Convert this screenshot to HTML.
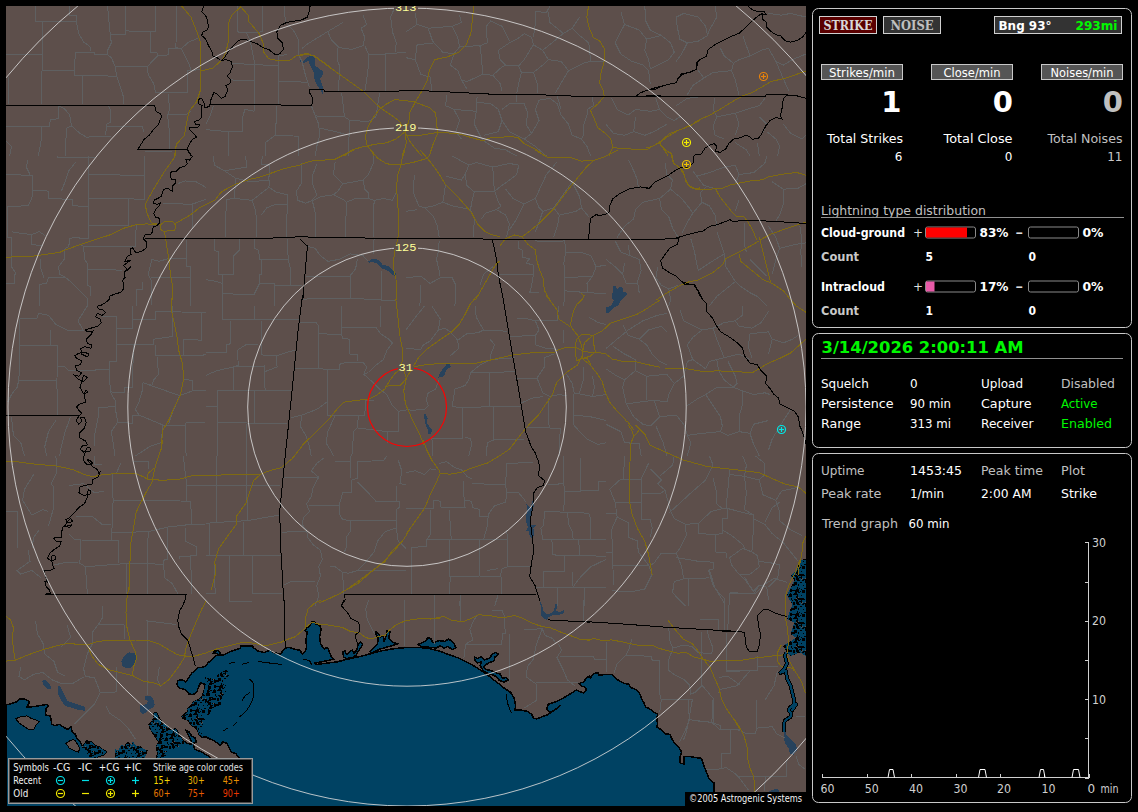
<!DOCTYPE html>
<html lang="en"><head><meta charset="utf-8"><title>Lightning Monitor</title>
<style>
html,body{margin:0;padding:0;background:#000;overflow:hidden}
svg{display:block}
text{white-space:pre}
</style></head><body>
<svg width="1138" height="812" viewBox="0 0 1138 812">
<rect x="0" y="0" width="1138" height="812" fill="#000"/>
<defs><clipPath id="mc"><rect x="6" y="6" width="800" height="800"/></clipPath><pattern id="mp" width="24" height="24" patternUnits="userSpaceOnUse"><rect width="24" height="24" fill="#004263"/><rect x="10" y="4" width="2" height="1" fill="#000"/><rect x="2" y="17" width="1" height="2" fill="#000"/><rect x="18" y="1" width="3" height="1" fill="#000"/><rect x="1" y="2" width="2" height="3" fill="#000"/><rect x="2" y="7" width="1" height="3" fill="#000"/><rect x="1" y="18" width="1" height="1" fill="#000"/><rect x="20" y="20" width="3" height="1" fill="#000"/><rect x="18" y="18" width="2" height="1" fill="#000"/><rect x="7" y="1" width="3" height="1" fill="#000"/><rect x="9" y="13" width="1" height="1" fill="#000"/><rect x="18" y="9" width="3" height="1" fill="#000"/><rect x="3" y="18" width="3" height="1" fill="#000"/><rect x="11" y="3" width="3" height="1" fill="#000"/><rect x="18" y="1" width="3" height="1" fill="#000"/><rect x="15" y="21" width="3" height="3" fill="#000"/><rect x="10" y="14" width="3" height="3" fill="#000"/><rect x="11" y="9" width="1" height="1" fill="#000"/><rect x="22" y="7" width="1" height="2" fill="#000"/><rect x="16" y="15" width="2" height="3" fill="#000"/><rect x="9" y="19" width="1" height="1" fill="#000"/><rect x="16" y="13" width="1" height="2" fill="#000"/><rect x="4" y="15" width="2" height="1" fill="#000"/><rect x="21" y="2" width="3" height="2" fill="#000"/><rect x="10" y="22" width="2" height="3" fill="#000"/><rect x="18" y="14" width="1" height="1" fill="#000"/><rect x="8" y="15" width="1" height="1" fill="#000"/><rect x="23" y="22" width="2" height="3" fill="#000"/><rect x="9" y="22" width="2" height="2" fill="#000"/><rect x="0" y="14" width="2" height="1" fill="#000"/><rect x="19" y="3" width="2" height="1" fill="#000"/><rect x="6" y="9" width="1" height="1" fill="#000"/><rect x="12" y="12" width="2" height="1" fill="#000"/><rect x="5" y="14" width="2" height="2" fill="#000"/><rect x="4" y="13" width="3" height="2" fill="#000"/><rect x="22" y="13" width="2" height="3" fill="#000"/><rect x="7" y="4" width="1" height="1" fill="#000"/><rect x="4" y="7" width="1" height="1" fill="#000"/><rect x="15" y="18" width="1" height="2" fill="#000"/><rect x="9" y="0" width="1" height="3" fill="#000"/><rect x="17" y="11" width="3" height="2" fill="#000"/><rect x="4" y="22" width="3" height="1" fill="#000"/><rect x="14" y="21" width="3" height="3" fill="#000"/><rect x="12" y="12" width="2" height="1" fill="#000"/><rect x="15" y="20" width="2" height="1" fill="#000"/><rect x="6" y="2" width="1" height="3" fill="#000"/><rect x="5" y="3" width="2" height="1" fill="#000"/><rect x="3" y="0" width="3" height="1" fill="#000"/><rect x="17" y="3" width="2" height="1" fill="#000"/><rect x="2" y="6" width="3" height="3" fill="#000"/><rect x="4" y="20" width="2" height="2" fill="#000"/><rect x="19" y="11" width="2" height="1" fill="#000"/><rect x="3" y="15" width="2" height="3" fill="#000"/><rect x="15" y="9" width="1" height="1" fill="#000"/><rect x="3" y="23" width="2" height="2" fill="#000"/><rect x="15" y="22" width="1" height="1" fill="#000"/><rect x="6" y="16" width="2" height="1" fill="#000"/><rect x="22" y="17" width="1" height="2" fill="#000"/><rect x="20" y="2" width="2" height="2" fill="#000"/><rect x="5" y="11" width="1" height="2" fill="#000"/><rect x="20" y="7" width="3" height="1" fill="#000"/><rect x="7" y="12" width="1" height="1" fill="#000"/><rect x="16" y="15" width="2" height="1" fill="#000"/><rect x="0" y="8" width="2" height="2" fill="#000"/><rect x="6" y="22" width="3" height="2" fill="#000"/><rect x="14" y="23" width="2" height="2" fill="#000"/><rect x="2" y="7" width="1" height="1" fill="#000"/><rect x="15" y="6" width="2" height="1" fill="#000"/><rect x="15" y="19" width="3" height="1" fill="#000"/><rect x="15" y="20" width="2" height="1" fill="#000"/><rect x="21" y="3" width="2" height="1" fill="#000"/><rect x="15" y="5" width="2" height="2" fill="#000"/><rect x="2" y="23" width="2" height="3" fill="#000"/><rect x="12" y="23" width="1" height="1" fill="#000"/><rect x="5" y="4" width="1" height="1" fill="#000"/><rect x="18" y="14" width="1" height="3" fill="#000"/><rect x="21" y="11" width="1" height="1" fill="#000"/><rect x="0" y="0" width="1" height="1" fill="#000"/><rect x="13" y="6" width="1" height="1" fill="#000"/><rect x="8" y="6" width="2" height="1" fill="#000"/><rect x="18" y="10" width="2" height="3" fill="#000"/><rect x="4" y="1" width="2" height="3" fill="#000"/><rect x="21" y="18" width="3" height="3" fill="#000"/><rect x="16" y="4" width="3" height="1" fill="#000"/><rect x="16" y="16" width="1" height="3" fill="#000"/><rect x="5" y="19" width="1" height="1" fill="#000"/><rect x="5" y="4" width="2" height="1" fill="#000"/><rect x="17" y="1" width="2" height="3" fill="#000"/><rect x="3" y="17" width="1" height="1" fill="#000"/><rect x="6" y="8" width="1" height="1" fill="#000"/><rect x="16" y="14" width="3" height="1" fill="#000"/><rect x="2" y="14" width="2" height="1" fill="#000"/><rect x="22" y="8" width="2" height="3" fill="#000"/><rect x="16" y="7" width="3" height="2" fill="#000"/><rect x="17" y="6" width="2" height="1" fill="#000"/><rect x="13" y="3" width="2" height="3" fill="#000"/><rect x="10" y="2" width="1" height="1" fill="#5d4f4b"/><rect x="21" y="7" width="1" height="1" fill="#5d4f4b"/><rect x="13" y="2" width="1" height="1" fill="#5d4f4b"/><rect x="6" y="21" width="1" height="1" fill="#5d4f4b"/><rect x="9" y="3" width="1" height="1" fill="#5d4f4b"/><rect x="4" y="22" width="1" height="1" fill="#5d4f4b"/></pattern></defs>
<g id="map" clip-path="url(#mc)" shape-rendering="crispEdges">
<rect x="6" y="6" width="800" height="800" fill="#5d4f4b"/>
<path d="M6.0 806.0 L6.0 704.8 L6.0 704.8 L10.4 704.0 L16.3 701.8 L20.0 698.9 L25.2 699.2 L29.6 701.5 L28.2 704.8 L26.7 707.0 L30.4 707.0 L37.8 706.0 L45.1 704.8 L47.4 704.5 L48.1 706.5 L45.9 708.5 L45.6 715.1 L50.3 715.9 L51.8 724.0 L54.8 725.5 L59.2 724.3 L64.4 727.7 L68.0 729.6 L71.0 726.9 L72.2 732.1 L75.4 734.3 L76.9 738.8 L79.9 741.0 L82.8 746.9 L86.5 741.0 L91.7 741.7 L94.6 745.4 L99.1 746.9 L102.0 749.1 L106.5 752.0 L103.5 755.0 L97.6 756.5 L94.6 759.4 L95.0 775.0 L245.0 775.0 L240.5 760.0 L236.0 753.8 L231.6 752.3 L228.6 747.1 L227.2 743.4 L222.7 741.9 L220.5 745.6 L216.8 742.7 L213.9 740.5 L209.4 738.7 L205.7 736.8 L202.0 737.5 L199.1 734.5 L196.9 728.6 L190.2 724.2 L188.8 720.5 L182.8 718.3 L182.1 716.1 L188.8 710.9 L187.3 709.4 L191.7 705.0 L193.2 702.0 L199.1 699.1 L202.0 696.9 L204.3 690.2 L205.0 684.3 L200.6 682.8 L198.4 687.3 L196.9 691.7 L193.2 694.7 L188.8 693.9 L185.8 690.2 L182.8 688.8 L179.1 688.0 L176.9 684.3 L177.7 680.6 L182.1 679.6 L185.8 682.1 L188.8 677.7 L191.7 673.2 L196.1 669.5 L197.6 667.3 L202.0 667.3 L205.0 666.6 L208.0 662.9 L212.4 659.2 L216.1 655.5 L218.3 654.8 L215.3 652.6 L213.1 653.3 L213.9 651.1 L218.3 650.6 L220.5 652.6 L219.8 655.5 L224.2 654.8 L231.6 651.1 L240.5 648.1 L240.5 645.9 L252.3 645.9 L253.8 648.1 L258.2 651.1 L264.1 652.6 L270.0 650.3 L273.7 652.6 L280.3 654.0 L285.5 648.1 L289.2 647.4 L293.6 648.9 L300.0 650.3 L302.2 653.9 L305.1 651.7 L306.6 647.3 L305.9 639.9 L307.3 631.8 L305.1 631.0 L306.6 628.1 L309.5 625.9 L311.8 622.2 L314.7 622.2 L316.2 624.4 L319.9 625.1 L321.1 629.5 L319.6 636.9 L320.6 644.3 L324.3 648.8 L327.3 647.3 L328.8 650.2 L331.0 656.1 L333.9 659.1 L324.3 661.3 L314.7 663.2 L315.5 664.6 L324.3 663.5 L337.6 661.8 L346.5 659.4 L356.8 657.2 L365.7 655.0 L374.5 652.7 L383.4 650.5 L392.3 648.9 L401.1 647.9 L413.0 647.3 L421.8 647.7 L429.9 648.5 L430.0 648.8 L438.9 651.0 L449.2 654.7 L459.5 658.4 L468.4 662.8 L477.3 668.0 L484.7 673.1 L489.1 676.1 L493.5 679.8 L499.4 684.2 L503.9 687.9 L508.3 690.9 L510.5 692.3 L514.2 698.2 L515.7 706.4 L514.9 710.1 L521.6 710.1 L527.5 711.5 L531.9 714.5 L533.4 718.2 L536.4 718.9 L542.3 716.7 L548.2 714.5 L555.6 709.3 L560.0 705.6 L557.0 708.6 L549.7 712.3 L546.7 709.3 L548.2 704.2 L555.6 701.9 L563.0 698.2 L570.3 693.8 L576.3 690.1 L583.6 693.1 L586.6 690.1 L585.1 687.2 L580.7 685.7 L579.2 683.5 L583.6 682.0 L586.6 677.6 L590.0 676.1 L590.3 678.4 L593.3 673.9 L597.7 672.4 L599.2 675.4 L603.6 674.7 L611.8 674.4 L614.7 677.6 L619.9 681.3 L624.3 683.5 L628.8 684.3 L630.2 687.2 L636.9 690.2 L639.8 693.9 L642.0 699.8 L644.3 703.5 L645.7 707.2 L649.4 708.6 L653.9 712.3 L657.6 713.8 L656.8 719.0 L657.6 723.4 L656.8 727.1 L660.5 729.3 L665.7 733.8 L670.1 734.5 L672.3 740.0 L671.1 736.6 L673.9 742.2 L678.1 746.4 L681.6 752.0 L680.2 756.2 L680.2 763.3 L684.4 764.0 L683.7 756.9 L688.0 756.2 L696.4 757.6 L701.3 758.3 L704.1 766.1 L706.2 771.7 L709.1 778.7 L714.0 783.0 L714.0 792.1 L713.3 806.9 L713.0 810.0 L6.0 810.0Z" fill="#004263" stroke="#000" stroke-width="1.5" stroke-linejoin="round"/>
<path d="M156.3 762.6 L157.7 752.3 L156.3 746.4 L159.2 741.9 L154.8 736.0 L150.3 728.6 L148.9 724.2 L153.3 722.0 L154.8 718.3 L153.3 713.9 L156.3 712.4 L158.5 716.8 L162.2 722.7 L168.1 727.2 L171.8 730.1 L175.5 728.6 L179.1 734.5 L182.8 740.5 L187.3 743.4 L191.7 744.2 L191.0 740.5 L188.8 736.0 L185.8 730.1 L188.8 731.6 L191.7 736.0 L195.4 738.2 L196.1 741.9 L193.2 743.4 L194.7 749.3 L202.0 752.3 L209.4 756.7 L213.9 762.6Z" fill="#004263" stroke="#000" stroke-width="1.5" stroke-linejoin="round"/>
<path d="M342.8 651.7 L345.0 651.0 L346.5 654.7 L349.4 651.7 L352.4 650.2 L353.9 653.2 L356.8 650.2 L358.3 644.3 L360.5 642.1 L362.7 644.3 L361.3 647.3 L358.3 651.0 L356.1 655.4 L352.4 657.6 L346.5 658.4 L343.5 656.9Z" fill="#004263" stroke="#000" stroke-width="1.5" stroke-linejoin="round"/>
<path d="M370.1 651.0 L374.5 647.3 L377.5 644.3 L378.2 638.4 L376.0 634.0 L375.3 631.8 L377.5 632.5 L380.5 636.9 L383.4 636.2 L384.2 641.4 L386.4 635.5 L387.1 630.3 L390.1 631.8 L388.6 638.4 L393.8 642.8 L398.2 643.6 L393.8 645.1 L386.4 647.3 L380.5 648.8 L374.5 651.7 L370.9 653.2Z" fill="#004263" stroke="#000" stroke-width="1.5" stroke-linejoin="round"/>
<path d="M418.1 644.3 L421.8 642.8 L426.3 640.6 L427.7 637.7 L430.7 638.4 L432.2 641.4 L433.0 642.8 L438.9 640.6 L444.8 641.4 L448.5 639.1 L452.2 641.4 L454.4 644.3 L455.9 648.0 L452.2 649.5 L447.7 646.5 L444.0 648.0 L440.3 645.8 L435.9 648.0 L430.0 647.3 L421.8 647.0Z" fill="#004263" stroke="#000" stroke-width="1.5" stroke-linejoin="round"/>
<path d="M474.3 656.9 L477.3 658.4 L481.0 656.9 L484.7 659.8 L489.1 658.4 L492.0 654.7 L495.0 652.4 L498.7 653.9 L495.0 656.9 L494.3 660.6 L489.1 662.8 L485.4 665.0 L483.2 667.2 L486.1 669.4 L492.0 670.9 L496.5 673.1 L500.2 673.9 L502.4 678.3 L506.1 677.6 L508.3 679.8 L503.9 682.0 L499.4 680.5 L496.5 676.8 L492.0 674.6 L487.6 673.1 L483.2 670.9 L480.2 665.7 L481.7 662.0 L477.3 662.8 L475.1 660.6Z" fill="#004263" stroke="#000" stroke-width="1.5" stroke-linejoin="round"/>
<path d="M803.5 560.0 L802.6 578.5 L804.5 597.0 L801.7 615.5 L803.5 637.6 L806.3 652.4 L807.2 652.4 L807.2 560.0Z" fill="#004263" stroke="#000" stroke-width="1.5" stroke-linejoin="round"/>
<path d="M205.0 676.9 L209.4 678.7 L215.3 676.9 L219.8 673.2 L227.2 669.5 L228.6 675.5 L226.4 684.3 L225.7 691.7 L221.3 699.1 L220.5 705.0 L213.9 707.2 L209.4 713.9 L205.7 716.8 L203.5 722.7 L202.8 728.6 L202.0 736.8 L199.1 734.5 L196.9 728.6 L190.2 724.2 L188.8 720.5 L182.8 718.3 L182.1 716.1 L188.8 710.9 L187.3 709.4 L191.7 705.0 L193.2 702.0 L199.1 699.1 L202.0 696.9 L204.3 690.2 L205.0 684.3Z" fill="url(#mp)"/>
<path d="M157.7 752.3 L156.3 746.4 L159.2 741.9 L154.8 736.0 L150.3 728.6 L148.9 724.2 L153.3 722.0 L154.8 718.3 L153.3 713.9 L156.3 712.4 L158.5 716.8 L162.2 722.7 L168.1 727.2 L171.8 730.1 L175.5 728.6 L179.1 734.5 L182.8 740.5 L184.3 743.4 L179.9 746.4 L174.0 748.6 L166.6 752.3 L162.2 756.7Z" fill="url(#mp)"/>
<path d="M115.3 759.4 L115.3 755.0 L114.6 749.1 L118.3 750.6 L121.2 744.7 L124.2 746.1 L127.9 741.0 L131.6 744.7 L133.0 741.0 L136.0 746.1 L140.4 745.4 L143.4 749.1 L147.8 750.6 L146.3 755.0 L143.4 759.4Z" fill="url(#mp)"/>
<path d="M79.9 741.0 L82.8 746.9 L86.5 741.0 L91.7 741.7 L94.6 745.4 L99.1 746.9 L102.0 749.1 L106.5 752.0 L103.5 755.0 L97.6 756.5 L94.6 759.4 L88.7 756.5 L85.8 750.6 L81.3 746.1Z" fill="url(#mp)"/>
<path d="M156.7 759.4 L158.2 752.0 L156.7 746.1 L159.6 740.2 L158.2 734.3 L153.7 729.9 L151.5 726.9 L149.3 724.0 L152.3 719.5 L155.2 715.1 L153.0 711.4 L156.7 713.6 L159.6 719.5 L166.0 725.5 L166.0 759.4Z" fill="url(#mp)"/>
<path d="M799.8 560.0 L796.1 571.1 L790.6 575.7 L794.3 580.3 L786.9 595.1 L792.4 604.4 L786.9 619.2 L794.3 622.9 L790.6 634.0 L796.1 637.6 L783.2 646.0 L786.9 652.4 L790.6 656.1 L799.8 652.4 L806.3 656.1 L806.3 560.0Z" fill="url(#mp)"/>
<path d="M15.6 718.8 L20.8 716.6 L26.7 715.9 L31.9 718.8 L37.0 720.3 L39.2 721.8 L35.5 725.5 L34.1 729.1 L29.6 729.9 L23.7 726.2 L19.3 723.2Z" fill="#5d4f4b" stroke="#000" stroke-width="1"/>
<path d="M65.8 743.2 L69.5 741.0 L73.2 739.5 L75.4 741.0 L77.7 744.7 L79.9 748.4 L78.4 752.0 L74.0 750.6 L69.5 748.4Z" fill="#5d4f4b" stroke="#000" stroke-width="1"/>
<path d="M299.5 59.6 L303.6 61.4 L307.3 56.8 L311.9 55.9 L314.7 58.6 L314.7 65.1 L319.3 68.8 L323.5 71.6 L322.1 76.2 L320.2 78.9 L323.0 87.3 L323.5 96.5 L322.1 92.8 L318.4 87.3 L314.7 79.9 L313.7 72.5 L310.1 65.1 L308.2 60.5 L304.5 63.2 L300.8 62.3Z" fill="#27425c"/>
<path d="M124.2 656.1 L128.8 652.4 L134.3 653.0 L136.7 657.0 L135.3 662.6 L131.6 667.2 L127.0 668.5 L122.3 666.3 L121.4 661.6Z" fill="#27425c"/>
<path d="M144.5 696.7 L149.1 695.4 L152.8 697.7 L154.7 703.2 L151.9 707.8 L147.3 710.6 L143.6 714.3 L140.4 712.4 L140.8 706.9 L145.4 705.0 L148.2 701.3 L145.4 699.5Z" fill="#27425c"/>
<path d="M42.0 680.7 L45.7 680.1 L50.3 684.7 L51.2 688.8 L47.6 689.3 L43.9 685.6Z" fill="#27425c"/>
<path d="M58.6 684.7 L61.4 688.4 L64.2 694.0 L66.9 700.4 L73.4 703.2 L79.9 705.0 L84.5 706.9 L84.5 710.6 L78.9 710.2 L72.5 707.8 L65.1 706.0 L61.4 700.4 L57.7 694.0Z" fill="#27425c"/>
<path d="M612.7 286.7 L615.4 285.7 L617.3 290.4 L620.0 286.7 L621.9 287.6 L622.8 292.2 L627.4 293.1 L624.7 296.8 L621.9 300.0 L612.7 300.0 L611.7 294.0 L613.6 291.3Z" fill="#27425c"/>
<path d="M368.3 261.7 L371.1 259.0 L375.7 258.6 L380.3 261.7 L382.2 264.5 L388.6 266.3 L392.3 270.0 L396.0 273.7 L396.0 277.1 L391.4 273.7 L386.8 270.0 L381.3 268.2 L377.6 263.6 L372.0 261.7 L369.3 263.0Z" fill="#27425c"/>
<path d="M447.1 363.3 L449.5 364.3 L450.8 367.0 L447.1 368.9 L445.2 372.6 L444.3 376.3 L440.6 377.2 L438.4 377.7 L439.7 373.5 L442.5 368.9 L445.2 367.0Z" fill="#27425c"/>
<path d="M424.0 413.2 L426.2 415.0 L427.7 418.7 L426.8 422.4 L429.5 427.0 L431.8 428.9 L431.4 433.5 L428.6 433.9 L427.7 429.8 L425.5 424.3 L424.4 418.7Z" fill="#27425c"/>
<path d="M612.5 287.4 L615.2 285.5 L617.1 289.2 L619.9 286.5 L622.6 288.3 L623.5 292.0 L627.8 292.9 L624.5 297.5 L620.8 300.3 L618.9 304.9 L613.4 307.7 L609.7 312.3 L606.0 313.2 L606.0 307.7 L610.6 305.9 L614.3 300.3 L613.4 294.8Z" fill="#27425c"/>
<path d="M526.0 502.8 L527.9 505.6 L530.7 507.4 L532.5 500.9 L534.3 501.9 L533.4 508.3 L531.6 513.9 L530.1 519.4 L531.6 524.9 L536.2 524.9 L533.4 528.6 L534.3 534.2 L532.5 538.8 L529.7 536.0 L528.8 531.4 L526.0 530.5 L527.9 526.8 L526.0 521.3 L526.0 515.7 L527.5 510.2Z" fill="#27425c"/>
<path d="M540.1 601.5 L542.3 605.9 L543.8 611.8 L546.7 614.0 L551.1 613.3 L554.1 610.3 L555.6 603.7 L557.3 603.7 L556.3 611.1 L560.0 611.8 L563.7 610.3 L563.7 613.3 L558.5 614.8 L554.1 614.8 L548.2 617.0 L547.4 619.9 L543.8 618.5 L541.5 615.5 L541.1 608.9Z" fill="#27425c"/>
<path d="M144.4 696.9 L148.9 695.4 L151.8 696.9 L151.1 699.8 L154.0 701.3 L154.8 705.0 L152.6 708.0 L148.9 708.7 L145.9 713.1 L142.2 713.9 L140.0 710.9 L140.0 705.0 L143.0 705.7 L146.6 703.5 L148.1 700.6 L145.9 699.1Z" fill="#27425c"/>
<path d="M784.3 727.4 L786.4 735.1 L790.6 739.4 L796.2 745.0 L796.9 750.6 L793.4 754.8 L789.9 753.4 L788.5 747.8 L785.0 743.6 L783.6 735.1Z" fill="#27425c"/>
<path d="M768.8 791.4 L772.3 790.0 L776.5 788.9 L778.6 790.0 L778.6 792.8 L768.8 792.8Z" fill="#27425c"/>
<path d="M35.5 6.0 L35.5 21.7 L76.2 21.7 L76.2 15.2 L69.7 15.2 L69.7 6.0" fill="none" stroke="#5f6061" stroke-width="1"/>
<path d="M42.9 21.7 L42.9 54.0 L42.0 70.6 L41.1 103.9" fill="none" stroke="#5f6061" stroke-width="1"/>
<path d="M6.0 54.4 L42.0 54.9" fill="none" stroke="#5f6061" stroke-width="1"/>
<path d="M42.0 70.6 L74.3 70.6" fill="none" stroke="#5f6061" stroke-width="1"/>
<path d="M76.2 21.7 L78.9 33.7 L83.6 42.0 L90.0 46.6 L90.9 51.2" fill="none" stroke="#5f6061" stroke-width="1"/>
<path d="M75.3 52.2 L94.6 52.2 L94.6 54.9 L107.6 54.9" fill="none" stroke="#5f6061" stroke-width="1"/>
<path d="M75.3 52.2 L74.3 75.3 L116.8 76.2" fill="none" stroke="#5f6061" stroke-width="1"/>
<path d="M82.6 76.2 L82.6 103.9" fill="none" stroke="#5f6061" stroke-width="1"/>
<path d="M107.6 6.0 L109.4 26.3 L110.3 34.6 L111.3 42.9 L107.6 50.3 L107.6 54.9 L111.3 57.7 L115.0 66.0 L116.8 76.2 L120.5 87.3 L123.3 96.5 L123.6 103.9" fill="none" stroke="#5f6061" stroke-width="1"/>
<path d="M110.3 34.6 L125.7 34.6 L126.0 6.0" fill="none" stroke="#5f6061" stroke-width="1"/>
<path d="M126.0 30.9 L155.6 31.9 L155.6 6.0" fill="none" stroke="#5f6061" stroke-width="1"/>
<path d="M150.0 31.9 L150.0 52.2 L157.4 53.1 L157.4 55.9" fill="none" stroke="#5f6061" stroke-width="1"/>
<path d="M115.0 66.0 L147.3 66.9 L153.7 59.6 L157.4 55.9 L168.5 54.9 L168.5 48.5 L181.4 48.5 L175.9 47.6 L176.8 6.0" fill="none" stroke="#5f6061" stroke-width="1"/>
<path d="M147.3 66.9 L148.2 74.3 L153.7 83.6 L155.6 92.8 L187.9 92.8 L187.9 70.6 L199.9 69.7" fill="none" stroke="#5f6061" stroke-width="1"/>
<path d="M181.4 48.5 L188.8 63.2 L190.7 69.7" fill="none" stroke="#5f6061" stroke-width="1"/>
<path d="M181.4 48.5 L188.8 42.0 L198.1 38.3" fill="none" stroke="#5f6061" stroke-width="1"/>
<path d="M168.5 93.7 L169.4 109.4 L167.6 115.0 L169.4 131.6 L169.4 149.1" fill="none" stroke="#5f6061" stroke-width="1"/>
<path d="M167.6 115.0 L187.0 114.0 L190.7 111.3" fill="none" stroke="#5f6061" stroke-width="1"/>
<path d="M8.8 77.1 L8.8 103.9" fill="none" stroke="#5f6061" stroke-width="1"/>
<path d="M58.6 105.7 L58.6 118.7 L50.3 119.6 L49.4 126.0 L6.0 126.0" fill="none" stroke="#5f6061" stroke-width="1"/>
<path d="M58.6 105.7 L65.1 109.4 L69.7 115.0 L71.6 126.0 L66.9 127.9 L65.1 149.1" fill="none" stroke="#5f6061" stroke-width="1"/>
<path d="M71.6 126.0 L79.9 133.4 L86.3 137.1 L111.3 136.2" fill="none" stroke="#5f6061" stroke-width="1"/>
<path d="M108.5 105.7 L110.3 109.4 L110.3 122.3 L106.6 124.2 L105.7 135.3" fill="none" stroke="#5f6061" stroke-width="1"/>
<path d="M106.6 126.0 L142.7 127.0 L143.6 131.6" fill="none" stroke="#5f6061" stroke-width="1"/>
<path d="M41.1 127.0 L41.1 140.8 L38.3 156.0" fill="none" stroke="#5f6061" stroke-width="1"/>
<path d="M6.0 140.8 L11.5 146.4 L9.7 156.0" fill="none" stroke="#5f6061" stroke-width="1"/>
<path d="M65.1 149.1 L65.1 156.0" fill="none" stroke="#5f6061" stroke-width="1"/>
<path d="M144.5 151.9 L172.2 151.9" fill="none" stroke="#5f6061" stroke-width="1"/>
<path d="M237.4 6.0 L237.4 31.9 L246.6 32.8 L250.3 41.1 L254.0 59.6 L254.9 103.9" fill="none" stroke="#5f6061" stroke-width="1"/>
<path d="M262.3 6.0 L262.3 31.9 L246.6 32.8" fill="none" stroke="#5f6061" stroke-width="1"/>
<path d="M284.5 6.0 L285.4 24.5" fill="none" stroke="#5f6061" stroke-width="1"/>
<path d="M231.9 63.2 L254.0 64.7 L278.0 65.5 L278.0 81.7 L307.6 82.1" fill="none" stroke="#5f6061" stroke-width="1"/>
<path d="M278.9 81.7 L278.9 103.9" fill="none" stroke="#5f6061" stroke-width="1"/>
<path d="M230.0 79.9 L254.0 80.8" fill="none" stroke="#5f6061" stroke-width="1"/>
<path d="M278.0 65.5 L278.0 55.9 L287.3 54.4" fill="none" stroke="#5f6061" stroke-width="1"/>
<path d="M287.3 24.5 L294.6 31.9 L298.3 39.2 L298.3 54.0 L302.0 61.4 L305.7 76.2 L309.4 87.3" fill="none" stroke="#5f6061" stroke-width="1"/>
<path d="M302.0 48.5 L307.6 43.9 L324.2 33.7 L342.7 22.6" fill="none" stroke="#5f6061" stroke-width="1"/>
<path d="M327.9 31.9 L331.6 40.2 L339.0 47.6 L351.9 49.4 L363.0 45.7 L364.8 37.4 L361.1 28.2 L366.7 24.5 L363.0 15.2" fill="none" stroke="#5f6061" stroke-width="1"/>
<path d="M338.0 47.6 L337.1 59.6 L339.9 66.9 L339.0 79.9 L338.0 90.9" fill="none" stroke="#5f6061" stroke-width="1"/>
<path d="M364.8 45.7 L368.5 54.0 L368.5 65.1 L366.7 79.9 L364.8 90.9" fill="none" stroke="#5f6061" stroke-width="1"/>
<path d="M368.5 54.9 L385.1 54.0 L406.0 52.2" fill="none" stroke="#5f6061" stroke-width="1"/>
<path d="M385.1 54.0 L385.1 90.9" fill="none" stroke="#5f6061" stroke-width="1"/>
<path d="M395.3 6.0 L390.7 17.1 L392.5 31.9 L396.2 42.9 L395.3 52.2" fill="none" stroke="#5f6061" stroke-width="1"/>
<path d="M341.7 92.8 L343.6 109.4 L344.5 116.8 L350.0 120.5 L349.1 135.3 L348.2 156.0" fill="none" stroke="#5f6061" stroke-width="1"/>
<path d="M311.3 105.7 L315.0 115.0 L318.7 124.2 L319.6 135.3 L316.8 146.4 L315.0 156.0" fill="none" stroke="#5f6061" stroke-width="1"/>
<path d="M315.0 115.9 L335.3 116.8 L344.5 116.8" fill="none" stroke="#5f6061" stroke-width="1"/>
<path d="M350.0 120.5 L368.5 121.4 L375.9 116.8 L379.6 92.8" fill="none" stroke="#5f6061" stroke-width="1"/>
<path d="M276.2 105.7 L276.2 120.5 L275.3 135.3 L265.1 142.7 L266.0 156.0" fill="none" stroke="#5f6061" stroke-width="1"/>
<path d="M206.0 129.7 L228.2 131.6 L228.2 156.0" fill="none" stroke="#5f6061" stroke-width="1"/>
<path d="M242.9 116.8 L244.8 109.4 L254.0 111.3 L254.9 104.8" fill="none" stroke="#5f6061" stroke-width="1"/>
<path d="M242.9 116.8 L242.9 131.6 L228.2 131.6" fill="none" stroke="#5f6061" stroke-width="1"/>
<path d="M276.2 135.3 L298.3 136.2 L298.3 156.0" fill="none" stroke="#5f6061" stroke-width="1"/>
<path d="M318.7 127.9 L335.3 131.6 L349.1 135.3" fill="none" stroke="#5f6061" stroke-width="1"/>
<path d="M213.4 105.7 L209.7 116.8 L206.0 124.2" fill="none" stroke="#5f6061" stroke-width="1"/>
<path d="M415.2 13.4 L417.1 24.5 L428.2 28.2 L431.9 39.2 L433.7 42.9 L424.5 43.9 L417.1 44.8 L415.2 59.6 L420.8 74.3 L430.0 77.1" fill="none" stroke="#5f6061" stroke-width="1"/>
<path d="M428.2 28.2 L452.2 26.3 L461.4 22.6 L459.6 15.2" fill="none" stroke="#5f6061" stroke-width="1"/>
<path d="M433.7 42.9 L442.9 52.2 L454.0 54.0 L459.6 46.6 L457.7 37.4 L452.2 26.3" fill="none" stroke="#5f6061" stroke-width="1"/>
<path d="M459.6 46.6 L479.9 45.7 L487.3 42.9" fill="none" stroke="#5f6061" stroke-width="1"/>
<path d="M454.0 54.0 L450.3 65.1 L457.7 70.6 L461.4 79.9 L466.9 89.1" fill="none" stroke="#5f6061" stroke-width="1"/>
<path d="M479.9 45.7 L481.7 59.6 L482.6 74.3 L466.9 81.7 L461.4 79.9" fill="none" stroke="#5f6061" stroke-width="1"/>
<path d="M482.6 74.3 L492.8 75.3 L502.0 66.9 L505.7 65.1 L518.7 66.0 L524.2 59.6 L533.4 44.8 L531.6 37.4 L524.2 33.7 L516.8 39.2 L509.4 42.9 L498.3 50.3 L500.2 59.6 L505.7 65.1" fill="none" stroke="#5f6061" stroke-width="1"/>
<path d="M487.3 42.9 L486.3 26.3 L490.9 20.8 L502.0 26.3 L509.4 41.1" fill="none" stroke="#5f6061" stroke-width="1"/>
<path d="M492.8 75.3 L500.2 83.6 L502.0 90.9" fill="none" stroke="#5f6061" stroke-width="1"/>
<path d="M518.7 66.0 L521.4 72.5 L518.7 83.6 L516.8 92.8" fill="none" stroke="#5f6061" stroke-width="1"/>
<path d="M533.4 44.8 L542.7 50.3 L548.2 59.6 L542.7 65.1 L533.4 72.5 L521.4 72.5" fill="none" stroke="#5f6061" stroke-width="1"/>
<path d="M533.4 72.5 L537.1 83.6 L538.0 92.8" fill="none" stroke="#5f6061" stroke-width="1"/>
<path d="M542.7 50.3 L551.9 42.9 L563.0 33.7 L572.2 28.2 L579.6 17.1" fill="none" stroke="#5f6061" stroke-width="1"/>
<path d="M548.2 59.6 L561.1 61.4 L568.5 70.6 L563.0 79.9 L555.6 92.8" fill="none" stroke="#5f6061" stroke-width="1"/>
<path d="M568.5 70.6 L583.3 63.2 L590.7 61.4 L603.6 61.4" fill="none" stroke="#5f6061" stroke-width="1"/>
<path d="M590.7 61.4 L588.8 42.9 L579.6 35.5 L572.2 28.2" fill="none" stroke="#5f6061" stroke-width="1"/>
<path d="M533.4 37.4 L535.3 24.5 L535.3 11.5 L546.4 12.5 L550.0 6.0" fill="none" stroke="#5f6061" stroke-width="1"/>
<path d="M548.2 12.5 L550.0 22.6 L559.3 30.0 L563.0 33.7" fill="none" stroke="#5f6061" stroke-width="1"/>
<path d="M446.6 94.6 L445.7 105.7 L454.0 109.4 L476.2 111.3 L477.1 96.5" fill="none" stroke="#5f6061" stroke-width="1"/>
<path d="M476.2 111.3 L474.3 124.2 L479.9 135.3 L483.6 140.8" fill="none" stroke="#5f6061" stroke-width="1"/>
<path d="M454.0 109.4 L459.6 120.5 L455.9 131.6 L461.4 139.0" fill="none" stroke="#5f6061" stroke-width="1"/>
<path d="M477.1 102.0 L490.9 103.9 L498.3 109.4 L502.0 120.5 L498.3 131.6 L483.6 135.3" fill="none" stroke="#5f6061" stroke-width="1"/>
<path d="M502.0 109.4 L509.4 103.9 L524.2 103.9 L527.9 113.1 L526.0 124.2 L531.6 133.4 L524.2 139.0 L509.4 131.6 L502.0 120.5" fill="none" stroke="#5f6061" stroke-width="1"/>
<path d="M516.8 94.6 L516.8 102.0" fill="none" stroke="#5f6061" stroke-width="1"/>
<path d="M531.6 133.4 L539.0 120.5 L535.3 109.4 L539.0 100.2 L550.0 98.3 L557.4 103.9 L561.1 115.0 L568.5 124.2 L572.2 135.3 L581.4 139.0 L587.0 146.4 L590.7 156.0" fill="none" stroke="#5f6061" stroke-width="1"/>
<path d="M557.4 96.5 L561.1 109.4" fill="none" stroke="#5f6061" stroke-width="1"/>
<path d="M587.0 115.0 L583.3 126.0 L583.3 135.3 L581.4 139.0" fill="none" stroke="#5f6061" stroke-width="1"/>
<path d="M592.5 96.5 L593.4 105.7 L587.0 109.4 L587.0 115.0" fill="none" stroke="#5f6061" stroke-width="1"/>
<path d="M524.2 139.0 L535.3 146.4 L546.4 156.0" fill="none" stroke="#5f6061" stroke-width="1"/>
<path d="M483.6 140.8 L494.6 148.2 L505.7 150.0 L516.8 156.0" fill="none" stroke="#5f6061" stroke-width="1"/>
<path d="M406.0 31.9 L417.1 24.5" fill="none" stroke="#5f6061" stroke-width="1"/>
<path d="M406.0 57.7 L415.2 59.6" fill="none" stroke="#5f6061" stroke-width="1"/>
<path d="M430.0 77.1 L431.9 90.9" fill="none" stroke="#5f6061" stroke-width="1"/>
<path d="M620.8 11.5 L624.5 24.5 L618.9 35.5 L615.2 42.9 L620.8 54.0 L631.9 61.4 L642.9 65.1 L648.5 70.6 L650.3 83.6" fill="none" stroke="#5f6061" stroke-width="1"/>
<path d="M624.5 24.5 L639.2 30.0 L646.6 39.2 L644.8 50.3 L648.5 59.6 L650.3 68.8" fill="none" stroke="#5f6061" stroke-width="1"/>
<path d="M646.6 39.2 L661.4 35.5 L670.6 42.9 L674.3 52.2 L668.8 59.6 L650.3 68.8" fill="none" stroke="#5f6061" stroke-width="1"/>
<path d="M644.8 6.0 L645.7 20.8 L650.3 30.0 L661.4 35.5" fill="none" stroke="#5f6061" stroke-width="1"/>
<path d="M676.2 17.1 L683.6 13.4 L698.3 17.1 L705.7 26.3 L707.6 35.5 L698.3 41.1 L687.3 42.9 L679.9 39.2 L677.1 26.3 L676.2 17.1" fill="none" stroke="#5f6061" stroke-width="1"/>
<path d="M687.3 42.9 L681.7 54.0 L676.2 61.4" fill="none" stroke="#5f6061" stroke-width="1"/>
<path d="M715.0 6.0 L716.8 17.1 L709.4 30.0 L707.6 35.5" fill="none" stroke="#5f6061" stroke-width="1"/>
<path d="M720.5 48.5 L724.2 55.9 L733.4 63.2 L739.0 59.6 L750.0 55.9 L742.7 35.5" fill="none" stroke="#5f6061" stroke-width="1"/>
<path d="M750.0 55.9 L761.1 50.3 L768.5 48.5 L775.9 61.4 L781.4 74.3 L788.8 90.9" fill="none" stroke="#5f6061" stroke-width="1"/>
<path d="M733.4 63.2 L731.6 70.6 L735.3 79.9 L739.0 94.6" fill="none" stroke="#5f6061" stroke-width="1"/>
<path d="M731.6 70.6 L713.1 72.5 L703.9 78.0 L698.3 70.6" fill="none" stroke="#5f6061" stroke-width="1"/>
<path d="M703.9 78.0 L692.8 85.4 L687.3 94.6" fill="none" stroke="#5f6061" stroke-width="1"/>
<path d="M775.9 61.4 L783.3 65.1 L792.5 59.6 L806.0 54.0" fill="none" stroke="#5f6061" stroke-width="1"/>
<path d="M768.5 13.4 L781.4 15.2 L790.7 13.4 L806.0 17.1" fill="none" stroke="#5f6061" stroke-width="1"/>
<path d="M611.5 98.3 L617.1 109.4 L628.2 115.0 L635.5 109.4 L650.3 111.3 L659.6 109.4 L666.9 116.8 L674.3 120.5 L679.9 116.8" fill="none" stroke="#5f6061" stroke-width="1"/>
<path d="M659.6 109.4 L655.9 98.3" fill="none" stroke="#5f6061" stroke-width="1"/>
<path d="M635.5 116.8 L633.7 131.6 L624.5 135.3 L613.4 133.4 L606.0 124.2" fill="none" stroke="#5f6061" stroke-width="1"/>
<path d="M633.7 131.6 L644.8 135.3 L654.0 131.6 L666.9 124.2" fill="none" stroke="#5f6061" stroke-width="1"/>
<path d="M676.2 105.7 L687.3 98.3 L702.0 96.5" fill="none" stroke="#5f6061" stroke-width="1"/>
<path d="M715.0 98.3 L713.1 109.4 L716.8 116.8 L713.1 126.0 L715.0 135.3 L724.2 139.0" fill="none" stroke="#5f6061" stroke-width="1"/>
<path d="M716.8 116.8 L735.3 113.1 L746.4 109.4 L759.3 105.7 L764.8 98.3" fill="none" stroke="#5f6061" stroke-width="1"/>
<path d="M735.3 113.1 L739.0 124.2 L735.3 135.3" fill="none" stroke="#5f6061" stroke-width="1"/>
<path d="M759.3 116.8 L766.7 124.2 L763.0 131.6" fill="none" stroke="#5f6061" stroke-width="1"/>
<path d="M783.3 124.2 L790.7 133.4 L801.8 139.0 L806.0 135.3" fill="none" stroke="#5f6061" stroke-width="1"/>
<path d="M766.7 131.6 L775.9 139.0 L779.6 146.4 L777.7 156.0" fill="none" stroke="#5f6061" stroke-width="1"/>
<path d="M757.4 142.7 L759.3 156.0" fill="none" stroke="#5f6061" stroke-width="1"/>
<path d="M735.3 142.7 L746.4 150.0 L750.0 156.0" fill="none" stroke="#5f6061" stroke-width="1"/>
<path d="M88.2 156.0 L88.2 174.5 L144.5 175.4 L144.5 156.0" fill="none" stroke="#5f6061" stroke-width="1"/>
<path d="M88.2 174.5 L88.2 198.5 L127.9 198.8 L144.5 199.4 L144.5 175.4" fill="none" stroke="#5f6061" stroke-width="1"/>
<path d="M88.2 198.5 L88.2 225.3 L128.8 225.3 L128.8 199.4" fill="none" stroke="#5f6061" stroke-width="1"/>
<path d="M88.2 225.3 L88.2 238.2 L79.9 238.2 L79.9 237.3 L69.7 238.2 L68.8 246.5 L65.1 248.3" fill="none" stroke="#5f6061" stroke-width="1"/>
<path d="M57.7 156.0 L57.7 157.8 L94.6 157.8" fill="none" stroke="#5f6061" stroke-width="1"/>
<path d="M6.0 174.5 L32.8 175.4 L32.8 190.2 L48.5 191.1 L48.5 198.5 L72.5 199.4 L72.5 205.9 L88.2 206.2" fill="none" stroke="#5f6061" stroke-width="1"/>
<path d="M32.8 190.2 L31.9 198.5 L28.2 205.9 L7.8 206.2 L7.8 237.3 L11.5 237.3 L11.5 266.8 L15.2 272.3 L14.3 283.4 L6.0 283.4" fill="none" stroke="#5f6061" stroke-width="1"/>
<path d="M28.2 159.7 L26.3 167.1 L30.0 174.5" fill="none" stroke="#5f6061" stroke-width="1"/>
<path d="M76.2 161.5 L68.8 170.8 L65.1 181.9 L61.4 191.1" fill="none" stroke="#5f6061" stroke-width="1"/>
<path d="M11.5 231.7 L22.6 233.6 L31.9 234.5 L39.2 231.7 L44.8 235.4" fill="none" stroke="#5f6061" stroke-width="1"/>
<path d="M31.9 234.5 L31.9 244.6 L42.9 245.6" fill="none" stroke="#5f6061" stroke-width="1"/>
<path d="M65.1 248.3 L64.2 259.4 L58.6 266.8 L59.6 274.2 L65.1 277.0 L48.5 277.0 L46.6 283.4 L39.2 284.3 L39.2 306.0" fill="none" stroke="#5f6061" stroke-width="1"/>
<path d="M40.2 259.4 L40.2 266.8 L43.9 277.9" fill="none" stroke="#5f6061" stroke-width="1"/>
<path d="M65.1 277.0 L70.6 281.6 L79.9 290.8 L87.3 298.2 L87.3 306.0" fill="none" stroke="#5f6061" stroke-width="1"/>
<path d="M80.8 244.6 L83.6 246.5 L84.5 259.4 L87.3 263.1 L87.3 285.3 L90.9 287.1 L90.9 296.4" fill="none" stroke="#5f6061" stroke-width="1"/>
<path d="M83.6 246.5 L135.3 246.5 L136.2 225.3" fill="none" stroke="#5f6061" stroke-width="1"/>
<path d="M87.3 269.6 L122.3 270.1" fill="none" stroke="#5f6061" stroke-width="1"/>
<path d="M151.9 259.4 L150.0 266.8 L148.2 274.2 L151.9 281.6 L151.0 306.0" fill="none" stroke="#5f6061" stroke-width="1"/>
<path d="M151.9 259.4 L159.3 261.3 L168.5 258.5 L186.1 258.5 L186.1 266.8 L190.7 266.8 L190.7 277.0 L151.0 277.0" fill="none" stroke="#5f6061" stroke-width="1"/>
<path d="M186.1 240.0 L186.1 258.5" fill="none" stroke="#5f6061" stroke-width="1"/>
<path d="M190.7 277.0 L190.7 306.0" fill="none" stroke="#5f6061" stroke-width="1"/>
<path d="M142.7 281.6 L142.7 289.0 L136.2 289.9 L136.2 306.0" fill="none" stroke="#5f6061" stroke-width="1"/>
<path d="M192.5 204.0 L192.5 228.0" fill="none" stroke="#5f6061" stroke-width="1"/>
<path d="M177.7 183.7 L185.1 180.9 L196.2 181.9 L206.0 187.4" fill="none" stroke="#5f6061" stroke-width="1"/>
<path d="M163.0 203.1 L183.3 204.0 L192.5 204.0 L206.0 199.4" fill="none" stroke="#5f6061" stroke-width="1"/>
<path d="M213.4 156.0 L214.3 165.2 L224.5 170.8 L235.5 178.2 L234.6 198.5 L226.3 199.4 L225.4 237.3" fill="none" stroke="#5f6061" stroke-width="1"/>
<path d="M224.5 170.8 L246.6 167.1 L245.7 156.0" fill="none" stroke="#5f6061" stroke-width="1"/>
<path d="M235.5 178.2 L250.3 181.9 L268.8 180.0 L269.7 165.2 L261.4 164.3 L262.3 156.0" fill="none" stroke="#5f6061" stroke-width="1"/>
<path d="M234.6 198.5 L252.2 200.3 L255.9 211.4 L256.8 237.3" fill="none" stroke="#5f6061" stroke-width="1"/>
<path d="M252.2 200.3 L268.8 187.4 L269.7 180.0" fill="none" stroke="#5f6061" stroke-width="1"/>
<path d="M268.8 187.4 L276.2 192.0 L287.3 194.8 L287.3 204.0 L286.3 237.3" fill="none" stroke="#5f6061" stroke-width="1"/>
<path d="M261.4 215.1 L266.9 207.7 L276.2 204.0 L287.3 204.0" fill="none" stroke="#5f6061" stroke-width="1"/>
<path d="M301.1 163.4 L301.1 183.7 L296.5 191.1 L297.4 200.3 L305.7 203.1 L313.1 200.3" fill="none" stroke="#5f6061" stroke-width="1"/>
<path d="M316.8 164.3 L312.2 176.3 L313.1 185.5 L316.8 194.8 L312.2 200.3 L315.0 211.4 L315.9 237.3" fill="none" stroke="#5f6061" stroke-width="1"/>
<path d="M313.1 200.3 L320.5 196.6 L333.4 194.8 L344.5 200.3 L346.4 202.2 L345.4 237.3" fill="none" stroke="#5f6061" stroke-width="1"/>
<path d="M335.3 161.5 L333.4 174.5 L339.0 180.0 L342.7 183.7 L338.0 191.1 L333.4 194.8" fill="none" stroke="#5f6061" stroke-width="1"/>
<path d="M342.7 183.7 L353.7 181.9 L363.0 180.0 L368.5 174.5 L373.1 163.4 L373.1 156.0" fill="none" stroke="#5f6061" stroke-width="1"/>
<path d="M363.0 180.0 L364.8 189.2 L368.5 192.9 L368.5 198.5 L374.1 200.3 L373.1 237.3" fill="none" stroke="#5f6061" stroke-width="1"/>
<path d="M346.4 202.2 L355.6 198.5 L368.5 198.5" fill="none" stroke="#5f6061" stroke-width="1"/>
<path d="M374.1 200.3 L383.3 198.5 L392.5 200.3 L396.2 192.9" fill="none" stroke="#5f6061" stroke-width="1"/>
<path d="M214.3 239.1 L214.3 250.2 L218.9 252.0 L218.9 274.2 L222.6 274.2 L222.6 306.0" fill="none" stroke="#5f6061" stroke-width="1"/>
<path d="M239.2 239.1 L239.2 250.2 L233.7 255.7 L233.7 274.2 L222.6 274.2" fill="none" stroke="#5f6061" stroke-width="1"/>
<path d="M254.0 239.1 L254.0 248.3 L258.6 250.2 L259.6 259.4 L288.2 259.4 L287.3 239.1" fill="none" stroke="#5f6061" stroke-width="1"/>
<path d="M261.4 259.4 L261.4 274.2 L259.6 274.2 L259.6 283.4 L254.0 294.5 L245.7 294.5 L222.6 293.6" fill="none" stroke="#5f6061" stroke-width="1"/>
<path d="M259.6 283.4 L274.3 283.4 L274.3 306.0" fill="none" stroke="#5f6061" stroke-width="1"/>
<path d="M288.2 259.4 L290.9 270.5 L290.9 285.3 L274.3 285.3" fill="none" stroke="#5f6061" stroke-width="1"/>
<path d="M290.9 285.3 L302.0 285.3" fill="none" stroke="#5f6061" stroke-width="1"/>
<path d="M307.6 246.5 L315.0 248.3 L320.5 255.7 L327.9 261.3 L339.0 259.4 L350.0 253.9 L363.0 255.7 L368.5 261.3" fill="none" stroke="#5f6061" stroke-width="1"/>
<path d="M357.4 259.4 L355.6 268.7 L350.0 276.0 L305.7 276.0" fill="none" stroke="#5f6061" stroke-width="1"/>
<path d="M350.0 276.0 L350.0 298.2 L302.0 299.1" fill="none" stroke="#5f6061" stroke-width="1"/>
<path d="M374.1 239.1 L373.1 253.9" fill="none" stroke="#5f6061" stroke-width="1"/>
<path d="M381.4 270.5 L381.4 300.0 L396.2 300.0" fill="none" stroke="#5f6061" stroke-width="1"/>
<path d="M350.0 298.2 L381.4 300.0" fill="none" stroke="#5f6061" stroke-width="1"/>
<path d="M206.0 279.7 L217.1 281.6 L222.6 283.4" fill="none" stroke="#5f6061" stroke-width="1"/>
<path d="M414.3 174.5 L413.4 192.9 L418.9 205.9 L424.5 207.7 L433.7 205.9 L442.9 202.2 L445.7 183.7" fill="none" stroke="#5f6061" stroke-width="1"/>
<path d="M424.5 207.7 L433.7 216.9 L437.4 226.2 L439.2 237.3" fill="none" stroke="#5f6061" stroke-width="1"/>
<path d="M442.9 202.2 L452.2 205.9 L461.4 207.7 L470.6 209.6 L474.3 218.8 L473.4 237.3" fill="none" stroke="#5f6061" stroke-width="1"/>
<path d="M445.7 176.3 L461.4 180.0 L465.1 174.5 L468.8 165.2 L452.2 156.0" fill="none" stroke="#5f6061" stroke-width="1"/>
<path d="M465.1 174.5 L466.9 185.5 L474.3 192.0 L494.6 191.1 L502.0 185.5 L516.8 174.5 L518.7 165.2 L509.4 163.4 L492.8 167.1 L493.7 183.7 L494.6 191.1" fill="none" stroke="#5f6061" stroke-width="1"/>
<path d="M468.8 165.2 L476.2 162.5 L492.8 167.1" fill="none" stroke="#5f6061" stroke-width="1"/>
<path d="M474.3 192.0 L471.6 202.2 L470.6 209.6" fill="none" stroke="#5f6061" stroke-width="1"/>
<path d="M494.6 191.1 L498.3 202.2 L501.1 205.9 L496.5 209.6 L485.4 213.2 L481.7 218.8" fill="none" stroke="#5f6061" stroke-width="1"/>
<path d="M496.5 209.6 L505.7 215.1 L509.4 224.3 L506.6 237.3" fill="none" stroke="#5f6061" stroke-width="1"/>
<path d="M505.7 189.2 L513.1 198.5 L524.2 204.0 L535.3 198.5 L546.4 174.5 L557.4 161.5" fill="none" stroke="#5f6061" stroke-width="1"/>
<path d="M524.2 204.0 L516.8 218.8 L509.4 229.9" fill="none" stroke="#5f6061" stroke-width="1"/>
<path d="M535.3 198.5 L539.0 207.7 L542.7 211.4 L553.7 207.7 L572.2 181.9" fill="none" stroke="#5f6061" stroke-width="1"/>
<path d="M542.7 211.4 L539.0 222.5 L535.3 231.7" fill="none" stroke="#5f6061" stroke-width="1"/>
<path d="M553.7 207.7 L559.3 215.1 L557.4 226.2 L553.7 237.3" fill="none" stroke="#5f6061" stroke-width="1"/>
<path d="M572.2 181.9 L579.6 196.6 L581.4 207.7 L575.9 211.4 L559.3 215.1" fill="none" stroke="#5f6061" stroke-width="1"/>
<path d="M581.4 207.7 L588.8 216.9" fill="none" stroke="#5f6061" stroke-width="1"/>
<path d="M518.7 240.9 L518.7 248.3 L522.3 250.2 L522.3 257.6 L529.7 258.5 L526.0 263.1 L533.4 265.0 L533.4 274.2 L498.3 274.2" fill="none" stroke="#5f6061" stroke-width="1"/>
<path d="M533.4 274.2 L531.6 285.3 L529.7 292.7 L539.0 292.7" fill="none" stroke="#5f6061" stroke-width="1"/>
<path d="M535.3 240.9 L550.0 241.9 L564.8 240.9 L565.7 252.0 L563.9 263.1 L564.8 277.9 L563.9 306.0" fill="none" stroke="#5f6061" stroke-width="1"/>
<path d="M565.7 252.0 L583.3 253.0 L590.7 255.7 L596.2 266.8 L592.5 276.0 L564.8 277.9" fill="none" stroke="#5f6061" stroke-width="1"/>
<path d="M596.2 266.8 L606.0 265.0" fill="none" stroke="#5f6061" stroke-width="1"/>
<path d="M592.5 276.0 L587.0 283.4 L587.9 292.7 L606.0 293.6" fill="none" stroke="#5f6061" stroke-width="1"/>
<path d="M564.8 290.8 L587.9 292.7" fill="none" stroke="#5f6061" stroke-width="1"/>
<path d="M436.5 259.4 L439.2 270.5 L440.2 277.9 L430.0 283.4 L420.8 276.0 L406.0 277.9" fill="none" stroke="#5f6061" stroke-width="1"/>
<path d="M440.2 277.9 L452.2 277.9 L455.9 285.3 L454.9 306.0" fill="none" stroke="#5f6061" stroke-width="1"/>
<path d="M439.2 240.9 L438.3 252.0 L436.5 259.4" fill="none" stroke="#5f6061" stroke-width="1"/>
<path d="M492.8 266.8 L483.6 274.2 L479.9 285.3" fill="none" stroke="#5f6061" stroke-width="1"/>
<path d="M406.0 211.4 L417.1 209.6" fill="none" stroke="#5f6061" stroke-width="1"/>
<path d="M420.8 285.3 L419.9 306.0" fill="none" stroke="#5f6061" stroke-width="1"/>
<path d="M628.2 159.7 L633.7 170.8 L637.4 180.0 L638.3 187.4" fill="none" stroke="#5f6061" stroke-width="1"/>
<path d="M665.1 163.4 L666.9 174.5 L672.5 180.0 L670.6 189.2 L659.6 198.5 L661.4 209.6 L668.8 216.9 L672.5 228.0 L678.0 237.3" fill="none" stroke="#5f6061" stroke-width="1"/>
<path d="M659.6 198.5 L642.9 202.2 L635.5 209.6 L633.7 218.8 L624.5 226.2 L617.1 237.3" fill="none" stroke="#5f6061" stroke-width="1"/>
<path d="M670.6 189.2 L681.7 198.5 L689.1 207.7 L692.8 213.2 L687.3 222.5 L681.7 233.6" fill="none" stroke="#5f6061" stroke-width="1"/>
<path d="M692.8 213.2 L702.0 202.2 L709.4 205.9 L715.0 215.1 L716.8 226.2" fill="none" stroke="#5f6061" stroke-width="1"/>
<path d="M702.0 202.2 L700.2 192.9 L705.7 187.4" fill="none" stroke="#5f6061" stroke-width="1"/>
<path d="M692.8 170.8 L698.3 178.2 L703.9 185.5 L716.8 189.2" fill="none" stroke="#5f6061" stroke-width="1"/>
<path d="M696.5 176.3 L709.4 172.6 L724.2 167.1 L735.3 165.2" fill="none" stroke="#5f6061" stroke-width="1"/>
<path d="M735.3 165.2 L739.0 174.5 L735.3 183.7" fill="none" stroke="#5f6061" stroke-width="1"/>
<path d="M739.0 174.5 L753.7 172.6 L764.8 163.4 L766.7 156.0" fill="none" stroke="#5f6061" stroke-width="1"/>
<path d="M739.0 200.3 L735.3 211.4" fill="none" stroke="#5f6061" stroke-width="1"/>
<path d="M772.2 181.9 L783.3 189.2 L783.3 204.0 L779.6 215.1 L775.9 220.6" fill="none" stroke="#5f6061" stroke-width="1"/>
<path d="M783.3 189.2 L798.1 188.3 L806.0 183.7" fill="none" stroke="#5f6061" stroke-width="1"/>
<path d="M690.9 239.1 L694.6 252.0 L696.5 263.1 L698.3 270.5" fill="none" stroke="#5f6061" stroke-width="1"/>
<path d="M716.8 231.7 L720.5 242.8 L724.2 253.9 L726.0 266.8 L735.3 281.6 L739.0 285.3" fill="none" stroke="#5f6061" stroke-width="1"/>
<path d="M744.5 222.5 L744.5 244.6 L746.4 252.0" fill="none" stroke="#5f6061" stroke-width="1"/>
<path d="M698.3 270.5 L709.4 263.1 L724.2 253.9" fill="none" stroke="#5f6061" stroke-width="1"/>
<path d="M768.5 226.2 L775.9 237.3 L779.6 248.3 L775.9 259.4 L772.2 274.2" fill="none" stroke="#5f6061" stroke-width="1"/>
<path d="M779.6 248.3 L794.4 244.6 L806.0 242.8" fill="none" stroke="#5f6061" stroke-width="1"/>
<path d="M799.9 226.2 L801.8 239.1 L800.8 252.0 L801.8 266.8" fill="none" stroke="#5f6061" stroke-width="1"/>
<path d="M735.3 281.6 L726.0 289.0 L716.8 296.4 L709.4 306.0" fill="none" stroke="#5f6061" stroke-width="1"/>
<path d="M739.0 285.3 L750.0 292.7 L757.4 296.4 L766.7 306.0" fill="none" stroke="#5f6061" stroke-width="1"/>
<path d="M750.0 259.4 L757.4 266.8 L766.7 276.0" fill="none" stroke="#5f6061" stroke-width="1"/>
<path d="M615.2 240.9 L620.8 252.0 L630.0 255.7 L639.2 259.4 L641.1 270.5 L637.4 281.6 L639.2 292.7" fill="none" stroke="#5f6061" stroke-width="1"/>
<path d="M630.0 255.7 L628.2 244.6" fill="none" stroke="#5f6061" stroke-width="1"/>
<path d="M624.5 263.1 L622.6 274.2 L626.3 283.4 L637.4 283.4" fill="none" stroke="#5f6061" stroke-width="1"/>
<path d="M657.7 266.8 L655.9 277.9 L661.4 285.3 L668.8 289.0 L678.0 285.3" fill="none" stroke="#5f6061" stroke-width="1"/>
<path d="M668.8 289.0 L670.6 300.0 L668.8 306.0" fill="none" stroke="#5f6061" stroke-width="1"/>
<path d="M606.0 259.4 L615.2 266.8 L622.6 274.2" fill="none" stroke="#5f6061" stroke-width="1"/>
<path d="M19.9 318.9 L19.9 344.8 L18.9 379.9 L17.1 387.3 L11.5 394.6 L7.8 402.0" fill="none" stroke="#5f6061" stroke-width="1"/>
<path d="M19.9 318.9 L37.4 318.0 L38.3 313.4 L48.5 315.2 L55.9 324.5 L66.9 330.0 L83.6 330.9" fill="none" stroke="#5f6061" stroke-width="1"/>
<path d="M50.3 330.0 L50.3 345.7 L57.7 345.7 L57.7 366.9 L65.1 366.9 L68.8 370.6 L109.4 369.7 L109.4 361.4 L116.8 361.4 L116.8 328.2 L132.5 328.2" fill="none" stroke="#5f6061" stroke-width="1"/>
<path d="M19.9 345.7 L50.3 345.7" fill="none" stroke="#5f6061" stroke-width="1"/>
<path d="M18.9 380.8 L56.8 380.8 L57.7 366.9" fill="none" stroke="#5f6061" stroke-width="1"/>
<path d="M56.8 380.8 L57.7 415.0" fill="none" stroke="#5f6061" stroke-width="1"/>
<path d="M116.8 316.2 L116.8 328.2" fill="none" stroke="#5f6061" stroke-width="1"/>
<path d="M102.0 316.2 L116.8 316.2" fill="none" stroke="#5f6061" stroke-width="1"/>
<path d="M83.6 330.9 L78.0 320.8 L87.3 306.0" fill="none" stroke="#5f6061" stroke-width="1"/>
<path d="M132.5 306.0 L132.5 328.2" fill="none" stroke="#5f6061" stroke-width="1"/>
<path d="M132.5 319.9 L155.6 319.9 L155.6 311.5 L206.0 312.5" fill="none" stroke="#5f6061" stroke-width="1"/>
<path d="M116.8 344.8 L133.4 344.8 L153.7 344.8 L153.7 339.2 L172.2 336.5 L172.2 306.0" fill="none" stroke="#5f6061" stroke-width="1"/>
<path d="M109.4 369.7 L110.3 391.9 L124.2 392.8 L124.2 387.3 L132.5 387.3 L133.4 344.8" fill="none" stroke="#5f6061" stroke-width="1"/>
<path d="M110.3 391.9 L115.0 400.2 L115.0 406.6 L98.3 407.6 L98.3 416.8 L94.6 435.3 L94.6 446.4" fill="none" stroke="#5f6061" stroke-width="1"/>
<path d="M115.0 406.6 L117.7 422.3 L132.5 423.3 L132.5 415.0 L139.0 415.0" fill="none" stroke="#5f6061" stroke-width="1"/>
<path d="M155.6 344.8 L155.6 355.9 L183.3 355.9 L183.3 339.2 L201.8 340.2 L201.8 311.5" fill="none" stroke="#5f6061" stroke-width="1"/>
<path d="M183.3 355.9 L206.0 354.9" fill="none" stroke="#5f6061" stroke-width="1"/>
<path d="M157.4 356.8 L158.4 374.3 L153.7 379.9 L151.9 385.4 L142.7 382.6" fill="none" stroke="#5f6061" stroke-width="1"/>
<path d="M142.7 382.6 L142.7 389.1 L139.0 402.0 L135.3 409.4 L139.0 415.0 L163.0 425.1" fill="none" stroke="#5f6061" stroke-width="1"/>
<path d="M142.7 382.6 L179.6 395.6 L192.5 390.9 L192.5 380.8 L183.3 378.9" fill="none" stroke="#5f6061" stroke-width="1"/>
<path d="M192.5 390.9 L206.0 390.0" fill="none" stroke="#5f6061" stroke-width="1"/>
<path d="M163.0 425.1 L185.1 426.0 L186.1 422.3 L206.0 422.0" fill="none" stroke="#5f6061" stroke-width="1"/>
<path d="M185.1 426.0 L186.1 456.0" fill="none" stroke="#5f6061" stroke-width="1"/>
<path d="M117.7 422.3 L111.3 431.6 L113.1 442.7 L115.0 456.0" fill="none" stroke="#5f6061" stroke-width="1"/>
<path d="M163.0 425.1 L161.1 442.7 L150.0 446.4 L135.3 456.0" fill="none" stroke="#5f6061" stroke-width="1"/>
<path d="M70.6 416.8 L65.1 431.6 L61.4 446.4 L59.6 456.0" fill="none" stroke="#5f6061" stroke-width="1"/>
<path d="M55.9 420.5 L48.5 431.6 L44.8 446.4 L46.6 456.0" fill="none" stroke="#5f6061" stroke-width="1"/>
<path d="M11.5 416.8 L13.4 435.3 L20.8 442.7 L24.5 456.0" fill="none" stroke="#5f6061" stroke-width="1"/>
<path d="M179.6 395.6 L172.2 413.1 L168.5 424.2" fill="none" stroke="#5f6061" stroke-width="1"/>
<path d="M222.6 306.0 L222.6 319.9 L254.0 319.9 L254.0 306.0" fill="none" stroke="#5f6061" stroke-width="1"/>
<path d="M254.0 319.9 L261.4 319.9 L300.2 319.9" fill="none" stroke="#5f6061" stroke-width="1"/>
<path d="M230.9 320.8 L230.0 343.9 L226.3 344.8 L226.3 352.2 L206.0 352.2" fill="none" stroke="#5f6061" stroke-width="1"/>
<path d="M261.4 320.8 L261.4 354.9 L276.2 355.9 L287.3 352.2 L294.6 350.3" fill="none" stroke="#5f6061" stroke-width="1"/>
<path d="M276.2 355.9 L277.1 366.9 L265.1 371.6" fill="none" stroke="#5f6061" stroke-width="1"/>
<path d="M237.4 350.3 L245.7 344.8 L257.7 344.8" fill="none" stroke="#5f6061" stroke-width="1"/>
<path d="M237.4 350.3 L238.3 365.1 L233.7 366.9 L233.7 390.0 L217.1 390.9 L217.1 406.6 L206.0 406.6" fill="none" stroke="#5f6061" stroke-width="1"/>
<path d="M233.7 366.9 L264.2 366.0 L265.1 390.0 L233.7 390.0" fill="none" stroke="#5f6061" stroke-width="1"/>
<path d="M217.1 406.6 L217.1 456.0" fill="none" stroke="#5f6061" stroke-width="1"/>
<path d="M265.1 390.0 L290.9 390.0" fill="none" stroke="#5f6061" stroke-width="1"/>
<path d="M254.9 390.9 L254.9 423.3 L239.2 422.7 L217.1 422.3" fill="none" stroke="#5f6061" stroke-width="1"/>
<path d="M254.9 423.3 L287.3 423.3" fill="none" stroke="#5f6061" stroke-width="1"/>
<path d="M246.6 424.2 L246.6 456.0" fill="none" stroke="#5f6061" stroke-width="1"/>
<path d="M206.0 375.3 L217.1 370.6 L233.7 366.9" fill="none" stroke="#5f6061" stroke-width="1"/>
<path d="M300.2 322.3 L315.9 322.6 L318.7 325.4 L318.7 368.8 L294.6 368.8" fill="none" stroke="#5f6061" stroke-width="1"/>
<path d="M318.7 333.7 L341.7 334.6 L341.7 306.0" fill="none" stroke="#5f6061" stroke-width="1"/>
<path d="M341.7 327.2 L375.9 327.2 L380.5 333.7 L388.8 339.2 L392.5 342.9 L387.0 350.3 L383.3 359.6 L375.9 365.1 L368.5 372.5 L363.9 374.3" fill="none" stroke="#5f6061" stroke-width="1"/>
<path d="M341.7 334.6 L342.7 338.3 L349.1 339.2 L350.0 354.0 L357.4 354.9 L357.4 361.4" fill="none" stroke="#5f6061" stroke-width="1"/>
<path d="M318.7 368.8 L339.0 369.7 L339.9 364.2 L346.4 362.3 L363.0 362.3 L366.7 366.9 L363.9 374.3 L372.2 381.7 L379.6 389.1 L387.0 394.6" fill="none" stroke="#5f6061" stroke-width="1"/>
<path d="M327.0 369.7 L327.0 402.0 L327.9 415.0 L364.8 415.0 L365.7 400.2 L374.1 400.2" fill="none" stroke="#5f6061" stroke-width="1"/>
<path d="M327.0 402.0 L316.8 409.4 L302.0 415.0 L290.9 417.7" fill="none" stroke="#5f6061" stroke-width="1"/>
<path d="M302.0 415.0 L300.2 426.0 L305.7 435.3 L309.4 446.4 L311.3 456.0" fill="none" stroke="#5f6061" stroke-width="1"/>
<path d="M335.3 415.0 L327.9 431.6 L326.0 442.7 L331.6 451.9 L333.4 456.0" fill="none" stroke="#5f6061" stroke-width="1"/>
<path d="M364.8 415.0 L358.4 415.9 L357.4 427.9 L353.7 431.6 L351.9 456.0" fill="none" stroke="#5f6061" stroke-width="1"/>
<path d="M357.4 427.9 L387.0 431.6 L387.9 442.7" fill="none" stroke="#5f6061" stroke-width="1"/>
<path d="M387.0 394.6 L392.5 405.7 L398.1 411.3 L406.0 410.3" fill="none" stroke="#5f6061" stroke-width="1"/>
<path d="M398.1 411.3 L399.0 431.6 L387.0 431.6" fill="none" stroke="#5f6061" stroke-width="1"/>
<path d="M380.5 306.0 L380.5 327.2" fill="none" stroke="#5f6061" stroke-width="1"/>
<path d="M424.5 306.0 L417.1 315.2 L406.0 330.0" fill="none" stroke="#5f6061" stroke-width="1"/>
<path d="M431.9 306.0 L440.2 318.9 L438.3 330.0 L444.8 328.2 L450.3 331.9 L457.7 340.2 L466.9 333.7 L478.0 332.8 L483.6 330.0 L498.3 330.0 L506.6 331.9" fill="none" stroke="#5f6061" stroke-width="1"/>
<path d="M475.3 306.0 L476.2 317.1 L483.6 330.0" fill="none" stroke="#5f6061" stroke-width="1"/>
<path d="M457.7 340.2 L458.6 348.5 L450.3 355.9" fill="none" stroke="#5f6061" stroke-width="1"/>
<path d="M406.0 348.5 L420.8 349.4 L423.5 344.8 L430.0 341.1 L438.3 330.0" fill="none" stroke="#5f6061" stroke-width="1"/>
<path d="M490.0 339.2 L494.6 344.8 L490.9 354.0 L490.9 359.6 L479.9 365.1 L470.6 372.5 L468.8 379.9 L465.1 385.4 L454.9 389.1 L452.2 406.6" fill="none" stroke="#5f6061" stroke-width="1"/>
<path d="M490.9 359.6 L515.0 357.7" fill="none" stroke="#5f6061" stroke-width="1"/>
<path d="M470.6 372.5 L490.0 372.5 L515.0 371.6" fill="none" stroke="#5f6061" stroke-width="1"/>
<path d="M490.0 372.5 L489.1 406.6" fill="none" stroke="#5f6061" stroke-width="1"/>
<path d="M452.2 406.6 L462.3 407.6 L493.7 406.6 L520.5 406.6" fill="none" stroke="#5f6061" stroke-width="1"/>
<path d="M462.3 407.6 L462.3 438.0 L431.9 438.0 L432.8 456.0" fill="none" stroke="#5f6061" stroke-width="1"/>
<path d="M493.7 406.6 L493.7 439.9 L487.3 442.7 L486.3 456.0" fill="none" stroke="#5f6061" stroke-width="1"/>
<path d="M493.7 439.9 L511.3 439.9 L524.2 439.0" fill="none" stroke="#5f6061" stroke-width="1"/>
<path d="M428.2 392.8 L426.3 400.2 L428.2 405.7 L424.5 409.4 L411.5 410.3 L406.0 409.4" fill="none" stroke="#5f6061" stroke-width="1"/>
<path d="M428.2 392.8 L435.5 389.1 L439.2 379.9" fill="none" stroke="#5f6061" stroke-width="1"/>
<path d="M516.8 318.0 L527.9 318.9 L535.3 320.8 L557.4 320.8 L558.4 306.0" fill="none" stroke="#5f6061" stroke-width="1"/>
<path d="M509.4 336.5 L535.3 335.5 L535.3 344.8 L546.4 348.5 L559.3 349.4" fill="none" stroke="#5f6061" stroke-width="1"/>
<path d="M535.3 320.8 L539.0 330.0 L535.3 335.5" fill="none" stroke="#5f6061" stroke-width="1"/>
<path d="M515.0 378.9 L537.1 378.0 L542.7 392.8 L550.0 396.5 L559.3 394.6 L566.7 395.6" fill="none" stroke="#5f6061" stroke-width="1"/>
<path d="M537.1 378.0 L544.5 366.9 L544.5 357.7 L553.7 354.0" fill="none" stroke="#5f6061" stroke-width="1"/>
<path d="M521.4 403.0 L531.6 398.3 L542.7 396.5" fill="none" stroke="#5f6061" stroke-width="1"/>
<path d="M548.2 398.3 L549.1 427.9 L526.0 427.0" fill="none" stroke="#5f6061" stroke-width="1"/>
<path d="M549.1 427.9 L560.2 428.8 L559.3 456.0" fill="none" stroke="#5f6061" stroke-width="1"/>
<path d="M566.7 374.3 L572.2 383.6 L574.1 392.8 L573.1 409.4 L573.1 424.2 L579.6 431.6 L587.0 439.0 L598.1 444.5 L606.0 442.7" fill="none" stroke="#5f6061" stroke-width="1"/>
<path d="M574.1 392.8 L583.3 394.6 L592.5 396.5 L606.0 394.6" fill="none" stroke="#5f6061" stroke-width="1"/>
<path d="M573.1 415.0 L590.7 416.8 L606.0 420.5" fill="none" stroke="#5f6061" stroke-width="1"/>
<path d="M583.3 366.9 L583.3 379.9 L579.6 392.8" fill="none" stroke="#5f6061" stroke-width="1"/>
<path d="M592.5 376.2 L594.4 387.3 L592.5 396.5" fill="none" stroke="#5f6061" stroke-width="1"/>
<path d="M563.0 330.0 L563.0 342.9" fill="none" stroke="#5f6061" stroke-width="1"/>
<path d="M588.8 317.1 L598.1 322.6 L606.0 324.5" fill="none" stroke="#5f6061" stroke-width="1"/>
<path d="M465.1 437.1 L470.6 439.0 L471.6 444.5 L468.8 456.0" fill="none" stroke="#5f6061" stroke-width="1"/>
<path d="M606.0 348.5 L617.1 339.2 L628.2 330.0 L642.9 320.8 L657.7 315.2 L666.9 313.4" fill="none" stroke="#5f6061" stroke-width="1"/>
<path d="M622.6 324.5 L628.2 335.5 L639.2 339.2 L646.6 344.8 L652.2 354.0 L659.6 361.4 L666.9 365.1" fill="none" stroke="#5f6061" stroke-width="1"/>
<path d="M639.2 339.2 L648.5 330.0 L661.4 326.3 L666.9 331.9" fill="none" stroke="#5f6061" stroke-width="1"/>
<path d="M613.4 346.6 L624.5 354.0 L635.5 359.6 L635.5 370.6 L624.5 379.9 L622.6 387.3 L626.3 403.9 L633.7 416.8 L642.9 424.2" fill="none" stroke="#5f6061" stroke-width="1"/>
<path d="M635.5 370.6 L646.6 376.2 L666.9 374.3 L674.3 383.6 L668.8 394.6 L666.9 402.0 L654.0 400.2 L626.3 403.9" fill="none" stroke="#5f6061" stroke-width="1"/>
<path d="M646.6 376.2 L646.6 400.2" fill="none" stroke="#5f6061" stroke-width="1"/>
<path d="M654.0 400.2 L659.6 416.8 L650.3 426.0 L642.9 424.2" fill="none" stroke="#5f6061" stroke-width="1"/>
<path d="M659.6 416.8 L676.2 415.0 L683.6 424.2 L687.3 435.3 L702.0 433.4 L720.5 431.6 L727.9 435.3 L739.0 431.6 L750.0 433.4 L753.7 424.2 L768.5 420.5" fill="none" stroke="#5f6061" stroke-width="1"/>
<path d="M655.9 426.0 L663.2 442.7 L666.9 456.0" fill="none" stroke="#5f6061" stroke-width="1"/>
<path d="M674.3 383.6 L683.6 376.2 L687.3 361.4 L692.8 359.6 L687.3 344.8 L692.8 337.4 L702.0 330.0 L713.1 328.2 L716.8 339.2 L724.2 357.7 L716.8 359.6 L709.4 361.4 L705.7 368.8 L692.8 359.6" fill="none" stroke="#5f6061" stroke-width="1"/>
<path d="M679.9 309.7 L683.6 320.8 L694.6 326.3 L702.0 330.0" fill="none" stroke="#5f6061" stroke-width="1"/>
<path d="M713.1 328.2 L724.2 322.6 L735.3 320.8 L742.7 315.2 L742.7 306.0" fill="none" stroke="#5f6061" stroke-width="1"/>
<path d="M716.8 359.6 L718.7 370.6 L724.2 379.9 L733.4 387.3 L737.1 383.6 L735.3 376.2 L727.9 361.4" fill="none" stroke="#5f6061" stroke-width="1"/>
<path d="M724.2 357.7 L739.0 354.0 L750.0 359.6" fill="none" stroke="#5f6061" stroke-width="1"/>
<path d="M733.4 387.3 L742.7 390.9 L742.7 403.9 L739.0 416.8 L739.0 431.6" fill="none" stroke="#5f6061" stroke-width="1"/>
<path d="M742.7 390.9 L753.7 394.6 L764.8 392.8 L770.4 394.6" fill="none" stroke="#5f6061" stroke-width="1"/>
<path d="M705.7 394.6 L713.1 405.7 L720.5 416.8 L722.3 426.0 L720.5 431.6" fill="none" stroke="#5f6061" stroke-width="1"/>
<path d="M705.7 394.6 L716.8 387.3 L733.4 387.3" fill="none" stroke="#5f6061" stroke-width="1"/>
<path d="M687.3 405.7 L698.3 398.3 L705.7 394.6" fill="none" stroke="#5f6061" stroke-width="1"/>
<path d="M687.3 435.3 L690.9 442.7 L687.3 456.0" fill="none" stroke="#5f6061" stroke-width="1"/>
<path d="M735.3 320.8 L739.0 326.3 L751.9 328.2 L761.1 322.6 L768.5 311.5" fill="none" stroke="#5f6061" stroke-width="1"/>
<path d="M750.0 333.7 L748.2 346.6 L751.9 357.7" fill="none" stroke="#5f6061" stroke-width="1"/>
<path d="M750.0 333.7 L768.5 331.9 L772.2 339.2 L783.3 342.9 L792.5 339.2 L798.1 335.5" fill="none" stroke="#5f6061" stroke-width="1"/>
<path d="M772.2 339.2 L768.5 354.0" fill="none" stroke="#5f6061" stroke-width="1"/>
<path d="M790.7 409.4 L783.3 420.5 L772.2 439.0 L768.5 450.0" fill="none" stroke="#5f6061" stroke-width="1"/>
<path d="M750.0 433.4 L753.7 444.5 L759.3 456.0" fill="none" stroke="#5f6061" stroke-width="1"/>
<path d="M606.0 368.8 L617.1 376.2 L624.5 379.9" fill="none" stroke="#5f6061" stroke-width="1"/>
<path d="M606.0 424.2 L620.8 431.6 L624.5 442.7 L639.2 443.6 L641.1 456.0" fill="none" stroke="#5f6061" stroke-width="1"/>
<path d="M112.2 474.5 L113.1 500.3 L112.2 524.3 L111.3 540.0" fill="none" stroke="#5f6061" stroke-width="1"/>
<path d="M113.1 500.3 L142.7 500.3 L190.7 501.2 L191.6 524.3 L167.6 527.1 L148.2 531.7 L112.2 532.6" fill="none" stroke="#5f6061" stroke-width="1"/>
<path d="M148.2 531.7 L147.3 563.1" fill="none" stroke="#5f6061" stroke-width="1"/>
<path d="M167.6 527.1 L167.6 559.4 L163.0 560.3 L164.8 577.9 L172.2 583.4 L177.7 593.6" fill="none" stroke="#5f6061" stroke-width="1"/>
<path d="M80.8 540.0 L118.7 540.6 L118.7 563.1" fill="none" stroke="#5f6061" stroke-width="1"/>
<path d="M80.8 540.0 L79.9 563.1" fill="none" stroke="#5f6061" stroke-width="1"/>
<path d="M54.0 565.0 L66.9 562.2 L79.9 563.1 L85.4 566.8 L126.0 563.5 L147.3 563.1 L163.0 565.0" fill="none" stroke="#5f6061" stroke-width="1"/>
<path d="M85.4 566.8 L87.3 593.6" fill="none" stroke="#5f6061" stroke-width="1"/>
<path d="M126.0 563.5 L126.0 593.6" fill="none" stroke="#5f6061" stroke-width="1"/>
<path d="M147.3 563.1 L147.3 593.6" fill="none" stroke="#5f6061" stroke-width="1"/>
<path d="M183.3 456.0 L186.1 480.0 L186.1 501.2" fill="none" stroke="#5f6061" stroke-width="1"/>
<path d="M186.1 485.5 L206.0 485.2" fill="none" stroke="#5f6061" stroke-width="1"/>
<path d="M191.6 524.3 L206.0 524.0" fill="none" stroke="#5f6061" stroke-width="1"/>
<path d="M185.1 528.0 L185.1 540.9 L196.2 546.5 L196.2 555.7 L179.6 556.6 L179.6 559.4" fill="none" stroke="#5f6061" stroke-width="1"/>
<path d="M190.7 556.6 L191.6 593.6" fill="none" stroke="#5f6061" stroke-width="1"/>
<path d="M17.1 511.4 L17.1 548.3" fill="none" stroke="#5f6061" stroke-width="1"/>
<path d="M6.0 511.4 L17.1 511.4" fill="none" stroke="#5f6061" stroke-width="1"/>
<path d="M55.9 456.0 L56.8 472.6 L51.2 483.7 L54.0 487.4 L53.1 509.6 L48.5 526.2" fill="none" stroke="#5f6061" stroke-width="1"/>
<path d="M68.8 485.5 L83.6 483.7 L94.6 492.9 L103.9 491.1" fill="none" stroke="#5f6061" stroke-width="1"/>
<path d="M33.7 474.5 L24.5 489.2 L22.6 500.3 L31.9 515.1 L42.9 509.6 L48.5 511.4" fill="none" stroke="#5f6061" stroke-width="1"/>
<path d="M68.8 533.6 L74.3 539.1 L80.8 540.0" fill="none" stroke="#5f6061" stroke-width="1"/>
<path d="M76.2 516.9 L92.8 516.9 L102.0 524.3 L111.3 524.3" fill="none" stroke="#5f6061" stroke-width="1"/>
<path d="M28.2 550.2 L30.0 561.3 L17.1 570.5 L20.8 574.2 L31.9 570.5 L41.1 577.9" fill="none" stroke="#5f6061" stroke-width="1"/>
<path d="M94.6 456.0 L94.6 464.3 L102.0 464.3" fill="none" stroke="#5f6061" stroke-width="1"/>
<path d="M120.5 463.4 L116.8 472.6 L112.2 474.5" fill="none" stroke="#5f6061" stroke-width="1"/>
<path d="M133.4 461.5 L148.2 461.5 L148.2 468.9" fill="none" stroke="#5f6061" stroke-width="1"/>
<path d="M39.2 529.9 L33.7 537.3 L31.9 548.3" fill="none" stroke="#5f6061" stroke-width="1"/>
<path d="M216.2 456.0 L216.2 522.5" fill="none" stroke="#5f6061" stroke-width="1"/>
<path d="M246.6 456.0 L246.6 485.5 L247.6 520.6" fill="none" stroke="#5f6061" stroke-width="1"/>
<path d="M206.0 485.5 L279.9 485.5" fill="none" stroke="#5f6061" stroke-width="1"/>
<path d="M206.0 523.4 L216.2 522.5 L247.6 520.6 L278.9 515.1" fill="none" stroke="#5f6061" stroke-width="1"/>
<path d="M209.7 523.4 L209.7 555.7 L206.0 555.7" fill="none" stroke="#5f6061" stroke-width="1"/>
<path d="M243.9 521.6 L243.9 554.8" fill="none" stroke="#5f6061" stroke-width="1"/>
<path d="M206.0 555.7 L280.8 555.4" fill="none" stroke="#5f6061" stroke-width="1"/>
<path d="M229.1 555.7 L230.0 601.9 L252.2 601.9" fill="none" stroke="#5f6061" stroke-width="1"/>
<path d="M252.2 555.7 L252.2 593.6 L281.7 593.6" fill="none" stroke="#5f6061" stroke-width="1"/>
<path d="M214.3 563.1 L215.2 593.6 L206.0 593.6" fill="none" stroke="#5f6061" stroke-width="1"/>
<path d="M283.6 477.2 L318.7 477.2" fill="none" stroke="#5f6061" stroke-width="1"/>
<path d="M324.2 457.8 L316.8 463.4 L311.3 470.8 L318.7 477.2 L313.1 487.4 L311.3 496.6 L306.6 504.0 L309.4 511.4 L303.9 516.9 L302.0 524.3 L306.6 529.9 L307.6 537.3 L313.1 544.6 L320.5 550.2 L322.3 559.4 L318.7 566.8 L320.5 576.0 L316.8 585.3 L318.7 596.4 L315.0 606.0" fill="none" stroke="#5f6061" stroke-width="1"/>
<path d="M309.4 505.9 L339.0 505.9 L342.7 492.9 L351.9 492.0 L351.9 480.0 L357.4 478.2 L357.4 461.5 L383.3 460.6 L387.0 456.0" fill="none" stroke="#5f6061" stroke-width="1"/>
<path d="M350.0 456.0 L351.0 478.2" fill="none" stroke="#5f6061" stroke-width="1"/>
<path d="M357.4 481.9 L366.7 491.1 L375.9 501.2 L399.0 501.2 L399.0 507.7 L396.2 509.6 L396.2 520.6 L351.0 520.6 L342.7 519.7 L339.0 513.2 L339.0 505.9" fill="none" stroke="#5f6061" stroke-width="1"/>
<path d="M396.2 485.5 L396.2 501.2" fill="none" stroke="#5f6061" stroke-width="1"/>
<path d="M351.0 520.6 L350.0 531.7 L346.4 537.3 L346.4 546.5 L344.5 552.0" fill="none" stroke="#5f6061" stroke-width="1"/>
<path d="M281.7 532.1 L305.7 531.7" fill="none" stroke="#5f6061" stroke-width="1"/>
<path d="M396.2 520.6 L396.2 528.0 L385.1 531.7 L377.7 540.9 L374.1 552.0 L364.8 563.1 L357.4 570.5 L348.2 573.3 L342.7 572.3 L335.3 566.8 L329.7 566.8" fill="none" stroke="#5f6061" stroke-width="1"/>
<path d="M342.7 572.3 L343.6 593.6" fill="none" stroke="#5f6061" stroke-width="1"/>
<path d="M357.4 570.5 L406.0 570.9" fill="none" stroke="#5f6061" stroke-width="1"/>
<path d="M283.6 585.3 L290.9 581.6 L315.0 581.2" fill="none" stroke="#5f6061" stroke-width="1"/>
<path d="M396.2 528.0 L398.1 540.9 L406.0 548.3" fill="none" stroke="#5f6061" stroke-width="1"/>
<path d="M335.3 461.5 L350.0 461.5" fill="none" stroke="#5f6061" stroke-width="1"/>
<path d="M398.1 459.7 L401.8 470.8 L399.9 483.7 L406.0 484.6" fill="none" stroke="#5f6061" stroke-width="1"/>
<path d="M406.0 472.6 L415.2 470.8 L424.5 474.5 L430.0 468.9 L435.5 469.9" fill="none" stroke="#5f6061" stroke-width="1"/>
<path d="M439.2 463.4 L446.6 461.5 L454.0 467.1 L461.4 469.9 L466.9 476.3 L472.5 479.1" fill="none" stroke="#5f6061" stroke-width="1"/>
<path d="M463.2 480.9 L464.2 500.3 L471.6 501.2 L472.5 507.7 L479.9 509.6 L479.9 516.0 L488.2 516.0" fill="none" stroke="#5f6061" stroke-width="1"/>
<path d="M472.5 483.7 L505.7 484.6 L506.6 463.4 L533.4 462.5" fill="none" stroke="#5f6061" stroke-width="1"/>
<path d="M505.7 484.6 L506.6 492.9 L518.7 492.9 L524.2 499.4 L526.0 502.2" fill="none" stroke="#5f6061" stroke-width="1"/>
<path d="M506.6 492.9 L505.7 502.2 L494.6 505.9 L489.1 513.2 L488.2 516.0 L487.3 526.2 L483.6 539.1" fill="none" stroke="#5f6061" stroke-width="1"/>
<path d="M433.7 500.3 L433.7 508.6 L406.0 508.6" fill="none" stroke="#5f6061" stroke-width="1"/>
<path d="M433.7 500.3 L440.2 501.2 L441.1 507.7 L465.1 507.7 L464.2 500.3" fill="none" stroke="#5f6061" stroke-width="1"/>
<path d="M449.4 509.6 L450.3 526.2 L451.2 539.1 L426.3 540.0 L426.3 546.5 L411.5 547.4 L411.5 593.6" fill="none" stroke="#5f6061" stroke-width="1"/>
<path d="M430.9 509.6 L430.0 535.4 L426.3 540.0" fill="none" stroke="#5f6061" stroke-width="1"/>
<path d="M451.2 539.1 L479.9 539.5 L506.6 539.1" fill="none" stroke="#5f6061" stroke-width="1"/>
<path d="M479.9 539.5 L479.9 576.0 L450.3 577.0 L449.4 593.6" fill="none" stroke="#5f6061" stroke-width="1"/>
<path d="M449.4 540.0 L449.4 577.0" fill="none" stroke="#5f6061" stroke-width="1"/>
<path d="M506.6 529.9 L507.6 539.1 L507.6 566.8 L502.0 568.7 L500.2 576.0 L479.9 576.0" fill="none" stroke="#5f6061" stroke-width="1"/>
<path d="M507.6 566.8 L529.7 566.8" fill="none" stroke="#5f6061" stroke-width="1"/>
<path d="M487.3 570.5 L498.3 568.7" fill="none" stroke="#5f6061" stroke-width="1"/>
<path d="M501.1 577.0 L501.1 593.6" fill="none" stroke="#5f6061" stroke-width="1"/>
<path d="M544.5 511.4 L543.6 525.3 L540.8 528.0 L542.7 539.1 L606.0 539.5" fill="none" stroke="#5f6061" stroke-width="1"/>
<path d="M544.5 511.4 L567.6 512.3 L588.8 513.2 L590.7 518.8 L590.7 539.1" fill="none" stroke="#5f6061" stroke-width="1"/>
<path d="M567.6 512.3 L568.5 524.3 L572.2 531.7 L573.1 539.1" fill="none" stroke="#5f6061" stroke-width="1"/>
<path d="M563.9 456.0 L563.9 483.7 L548.2 484.6" fill="none" stroke="#5f6061" stroke-width="1"/>
<path d="M563.9 483.7 L564.8 500.3 L563.0 511.4" fill="none" stroke="#5f6061" stroke-width="1"/>
<path d="M580.5 457.8 L580.5 490.2 L598.1 490.2 L598.1 481.9 L606.0 481.9" fill="none" stroke="#5f6061" stroke-width="1"/>
<path d="M564.8 491.1 L580.5 491.1" fill="none" stroke="#5f6061" stroke-width="1"/>
<path d="M551.9 540.0 L552.8 554.8 L564.8 555.7 L590.7 555.7 L606.0 556.6" fill="none" stroke="#5f6061" stroke-width="1"/>
<path d="M578.7 540.0 L579.6 554.8" fill="none" stroke="#5f6061" stroke-width="1"/>
<path d="M564.8 555.7 L564.8 571.4 L543.6 571.4 L543.6 588.0" fill="none" stroke="#5f6061" stroke-width="1"/>
<path d="M572.2 572.3 L573.1 587.1 L606.0 587.5" fill="none" stroke="#5f6061" stroke-width="1"/>
<path d="M606.0 559.4 L590.7 566.8 L581.4 576.0 L574.1 585.3" fill="none" stroke="#5f6061" stroke-width="1"/>
<path d="M434.6 594.5 L434.6 606.0" fill="none" stroke="#5f6061" stroke-width="1"/>
<path d="M460.5 594.5 L459.6 606.0" fill="none" stroke="#5f6061" stroke-width="1"/>
<path d="M498.3 594.5 L494.6 606.0" fill="none" stroke="#5f6061" stroke-width="1"/>
<path d="M557.4 588.0 L557.4 606.0" fill="none" stroke="#5f6061" stroke-width="1"/>
<path d="M584.2 588.0 L584.2 606.0" fill="none" stroke="#5f6061" stroke-width="1"/>
<path d="M535.3 588.0 L573.1 587.5" fill="none" stroke="#5f6061" stroke-width="1"/>
<path d="M641.1 479.1 L641.1 519.7 L650.3 519.7 L652.2 528.0 L650.3 537.3" fill="none" stroke="#5f6061" stroke-width="1"/>
<path d="M609.7 489.2 L620.8 479.1 L641.1 479.1" fill="none" stroke="#5f6061" stroke-width="1"/>
<path d="M641.1 493.9 L659.6 493.9 L665.1 490.2" fill="none" stroke="#5f6061" stroke-width="1"/>
<path d="M615.2 502.2 L641.1 502.2" fill="none" stroke="#5f6061" stroke-width="1"/>
<path d="M609.7 489.2 L615.2 502.2 L617.1 516.9 L611.5 529.9 L612.5 548.3 L613.4 585.3" fill="none" stroke="#5f6061" stroke-width="1"/>
<path d="M617.1 516.9 L628.2 522.5 L628.2 537.3 L637.4 540.9 L638.3 552.0 L648.5 565.0" fill="none" stroke="#5f6061" stroke-width="1"/>
<path d="M606.0 513.2 L617.1 513.2" fill="none" stroke="#5f6061" stroke-width="1"/>
<path d="M612.5 565.0 L648.5 565.0 L652.2 574.2 L644.8 589.0 L631.9 591.7 L611.5 590.8" fill="none" stroke="#5f6061" stroke-width="1"/>
<path d="M624.5 456.0 L623.5 479.1" fill="none" stroke="#5f6061" stroke-width="1"/>
<path d="M648.5 463.4 L641.1 479.1" fill="none" stroke="#5f6061" stroke-width="1"/>
<path d="M650.3 468.9 L661.4 480.0 L657.7 483.7 L665.1 490.2 L670.6 511.4 L674.3 518.8 L685.4 524.3 L698.3 523.4 L711.3 511.4 L722.3 508.6 L727.9 508.6" fill="none" stroke="#5f6061" stroke-width="1"/>
<path d="M659.6 476.3 L672.5 465.2 L674.3 456.0" fill="none" stroke="#5f6061" stroke-width="1"/>
<path d="M685.4 524.3 L686.3 535.4 L679.9 548.3 L676.2 553.0 L681.7 566.8 L683.6 578.8 L674.3 581.6 L672.5 592.7 L685.4 606.0" fill="none" stroke="#5f6061" stroke-width="1"/>
<path d="M698.3 523.4 L698.3 533.6 L715.0 534.5 L722.3 533.6 L722.3 518.8 L727.9 518.8 L727.9 508.6" fill="none" stroke="#5f6061" stroke-width="1"/>
<path d="M715.0 534.5 L715.9 552.0 L726.0 553.0 L726.0 557.6" fill="none" stroke="#5f6061" stroke-width="1"/>
<path d="M676.2 553.0 L661.4 553.0 L654.0 563.1 L651.2 565.0" fill="none" stroke="#5f6061" stroke-width="1"/>
<path d="M676.2 557.6 L698.3 561.3 L713.1 562.2 L714.0 568.7 L708.5 570.5 L713.1 585.3 L718.7 592.7 L724.2 598.2 L724.2 606.0" fill="none" stroke="#5f6061" stroke-width="1"/>
<path d="M683.6 578.8 L709.4 577.9" fill="none" stroke="#5f6061" stroke-width="1"/>
<path d="M688.2 578.8 L688.2 606.0" fill="none" stroke="#5f6061" stroke-width="1"/>
<path d="M668.8 513.2 L690.9 492.9 L705.7 480.0 L713.1 465.2 L709.4 456.0" fill="none" stroke="#5f6061" stroke-width="1"/>
<path d="M713.1 478.2 L716.8 492.9 L716.8 504.0 L722.3 508.6" fill="none" stroke="#5f6061" stroke-width="1"/>
<path d="M729.7 468.9 L727.9 489.2 L726.0 508.6" fill="none" stroke="#5f6061" stroke-width="1"/>
<path d="M744.5 476.3 L746.4 492.9 L744.5 509.6 L753.7 515.1" fill="none" stroke="#5f6061" stroke-width="1"/>
<path d="M729.7 474.5 L744.5 476.3 L759.3 480.0" fill="none" stroke="#5f6061" stroke-width="1"/>
<path d="M727.9 508.6 L739.0 511.4 L753.7 515.1 L753.7 524.3 L751.9 552.0 L757.4 555.7 L759.3 566.8 L750.0 574.2 L739.0 574.2 L731.6 565.0 L729.7 557.6 L742.7 548.3 L751.9 552.0" fill="none" stroke="#5f6061" stroke-width="1"/>
<path d="M722.3 529.9 L731.6 535.4 L742.7 544.6 L744.5 548.3" fill="none" stroke="#5f6061" stroke-width="1"/>
<path d="M753.7 518.8 L764.8 524.3 L772.2 533.6 L783.3 542.8 L790.7 552.0 L798.1 561.3" fill="none" stroke="#5f6061" stroke-width="1"/>
<path d="M759.3 480.0 L763.0 494.8 L775.9 500.3 L779.6 511.4 L779.6 520.6 L790.7 529.9 L801.8 535.4" fill="none" stroke="#5f6061" stroke-width="1"/>
<path d="M775.9 500.3 L781.4 491.1 L798.1 487.4" fill="none" stroke="#5f6061" stroke-width="1"/>
<path d="M764.8 522.5 L772.2 507.7 L779.6 502.2" fill="none" stroke="#5f6061" stroke-width="1"/>
<path d="M759.3 561.3 L772.2 563.1 L779.6 565.0" fill="none" stroke="#5f6061" stroke-width="1"/>
<path d="M739.0 574.2 L746.4 581.6 L753.7 590.8 L759.3 585.3 L766.7 587.1 L768.5 600.0" fill="none" stroke="#5f6061" stroke-width="1"/>
<path d="M779.6 565.0 L777.7 577.9 L768.5 587.1" fill="none" stroke="#5f6061" stroke-width="1"/>
<path d="M742.7 456.0 L746.4 465.2 L744.5 476.3" fill="none" stroke="#5f6061" stroke-width="1"/>
<path d="M755.6 456.0 L764.8 463.4 L764.8 474.5 L759.3 480.0" fill="none" stroke="#5f6061" stroke-width="1"/>
<path d="M729.7 592.7 L753.7 593.6 L759.3 585.3" fill="none" stroke="#5f6061" stroke-width="1"/>
<path d="M606.0 552.0 L613.4 552.0" fill="none" stroke="#5f6061" stroke-width="1"/>
<path d="M124.2 624.5 L124.2 639.2" fill="none" stroke="#5f6061" stroke-width="1"/>
<path d="M147.3 620.8 L147.3 694.6" fill="none" stroke="#5f6061" stroke-width="1"/>
<path d="M35.5 620.8 L37.4 633.7 L42.9 642.9 L44.8 654.0 L54.0 661.4 L57.7 672.5 L65.1 676.2" fill="none" stroke="#5f6061" stroke-width="1"/>
<path d="M92.8 642.9 L87.3 654.0 L83.6 668.8 L85.4 676.2 L94.6 678.0 L98.3 687.3 L100.2 692.8 L94.6 703.9 L83.6 715.0 L74.3 724.2" fill="none" stroke="#5f6061" stroke-width="1"/>
<path d="M100.2 692.8 L116.8 691.9 L116.8 666.9" fill="none" stroke="#5f6061" stroke-width="1"/>
<path d="M20.8 666.9 L18.9 676.2 L24.5 679.9 L33.7 674.3 L42.9 672.5 L52.2 679.9 L61.4 683.6 L72.5 683.6 L83.6 677.1" fill="none" stroke="#5f6061" stroke-width="1"/>
<path d="M66.9 624.5 L70.6 637.4 L61.4 646.6" fill="none" stroke="#5f6061" stroke-width="1"/>
<path d="M102.0 606.0 L103.0 617.1 L98.3 624.5 L92.8 631.9 L92.8 642.9" fill="none" stroke="#5f6061" stroke-width="1"/>
<path d="M98.3 624.5 L124.2 624.5" fill="none" stroke="#5f6061" stroke-width="1"/>
<path d="M105.7 705.7 L109.4 713.1 L120.5 720.5 L127.9 727.9 L135.3 739.0" fill="none" stroke="#5f6061" stroke-width="1"/>
<path d="M146.4 620.8 L175.9 624.5" fill="none" stroke="#5f6061" stroke-width="1"/>
<path d="M159.3 666.9 L157.4 679.9 L161.1 687.3" fill="none" stroke="#5f6061" stroke-width="1"/>
<path d="M404.8 600.0 L404.8 645.8" fill="none" stroke="#5f6061" stroke-width="1"/>
<path d="M434.4 600.0 L434.8 644.3" fill="none" stroke="#5f6061" stroke-width="1"/>
<path d="M368.6 600.0 L365.7 608.9 L367.2 619.2 L371.6 628.1 L374.5 634.0" fill="none" stroke="#5f6061" stroke-width="1"/>
<path d="M434.4 600.0 L434.4 638.4" fill="none" stroke="#5f6061" stroke-width="1"/>
<path d="M460.3 600.0 L460.3 620.7" fill="none" stroke="#5f6061" stroke-width="1"/>
<path d="M477.3 614.8 L472.8 622.2 L469.9 629.5 L472.8 639.9 L465.5 644.3 L464.0 657.6" fill="none" stroke="#5f6061" stroke-width="1"/>
<path d="M503.9 613.3 L505.3 633.2 L502.4 634.0 L501.7 644.3 L465.5 644.3" fill="none" stroke="#5f6061" stroke-width="1"/>
<path d="M509.8 634.0 L509.0 682.7" fill="none" stroke="#5f6061" stroke-width="1"/>
<path d="M524.5 629.5 L542.3 628.8 L545.2 635.5 L552.6 638.4 L555.6 642.8" fill="none" stroke="#5f6061" stroke-width="1"/>
<path d="M542.3 628.8 L536.4 644.3 L533.4 659.1 L527.5 666.5 L526.0 676.8 L536.4 684.2 L536.4 700.5 L524.5 707.8" fill="none" stroke="#5f6061" stroke-width="1"/>
<path d="M536.4 682.7 L577.7 682.7" fill="none" stroke="#5f6061" stroke-width="1"/>
<path d="M558.5 644.3 L561.5 650.2 L557.0 657.6 L563.0 669.4 L567.4 679.8 L574.8 685.7" fill="none" stroke="#5f6061" stroke-width="1"/>
<path d="M560.0 656.1 L590.0 656.1" fill="none" stroke="#5f6061" stroke-width="1"/>
<path d="M583.6 600.0 L583.6 620.7" fill="none" stroke="#5f6061" stroke-width="1"/>
<path d="M492.0 610.3 L502.4 610.3 L502.4 613.3" fill="none" stroke="#5f6061" stroke-width="1"/>
<path d="M606.6 642.2 L606.6 671.7" fill="none" stroke="#5f6061" stroke-width="1"/>
<path d="M631.7 639.2 L628.8 649.5 L625.8 655.5 L616.9 664.3 L614.0 673.2" fill="none" stroke="#5f6061" stroke-width="1"/>
<path d="M625.8 655.5 L650.9 656.2 L652.4 660.6 L659.8 660.6 L659.8 693.9 L661.3 699.8 L659.8 711.6" fill="none" stroke="#5f6061" stroke-width="1"/>
<path d="M668.6 627.4 L670.1 642.2 L673.1 648.1 L668.6 659.9 L668.6 670.2 L674.5 674.7 L683.4 679.1 L689.3 685.0 L690.8 693.9 L695.2 692.4 L702.6 685.0" fill="none" stroke="#5f6061" stroke-width="1"/>
<path d="M673.1 648.1 L683.4 645.1 L692.3 646.6 L698.2 652.5 L711.5 654.0 L713.0 648.1 L708.5 636.3 L707.0 630.3" fill="none" stroke="#5f6061" stroke-width="1"/>
<path d="M701.1 631.8 L701.9 685.0 L713.0 698.3 L713.0 723.4 L719.6 729.3 L740.0 730.1" fill="none" stroke="#5f6061" stroke-width="1"/>
<path d="M726.3 632.6 L726.3 671.7 L740.0 671.7" fill="none" stroke="#5f6061" stroke-width="1"/>
<path d="M661.3 699.8 L692.3 699.8 L689.3 717.5 L686.4 732.3 L683.4 740.0" fill="none" stroke="#5f6061" stroke-width="1"/>
<path d="M692.3 720.5 L708.5 721.9 L713.0 723.4" fill="none" stroke="#5f6061" stroke-width="1"/>
<path d="M718.9 677.6 L727.7 676.1 L740.0 685.0" fill="none" stroke="#5f6061" stroke-width="1"/>
<path d="M580.0 656.9 L593.3 656.9 L594.8 659.9 L606.6 659.1" fill="none" stroke="#5f6061" stroke-width="1"/>
<path d="M688.0 700.0 L689.4 719.7 L711.9 722.5 L712.6 700.0" fill="none" stroke="#5f6061" stroke-width="1"/>
<path d="M689.4 719.7 L685.1 730.9 L679.5 742.2" fill="none" stroke="#5f6061" stroke-width="1"/>
<path d="M711.9 722.5 L720.3 725.3 L720.3 729.5 L730.8 729.5 L730.1 753.4 L721.7 753.4 L721.7 768.9 L706.2 769.6" fill="none" stroke="#5f6061" stroke-width="1"/>
<path d="M730.8 729.5 L740.0 729.5 L745.6 733.7 L755.4 733.7 L756.9 728.1 L772.3 726.7 L776.5 733.7 L785.0 738.0" fill="none" stroke="#5f6061" stroke-width="1"/>
<path d="M756.9 700.0 L756.9 728.1" fill="none" stroke="#5f6061" stroke-width="1"/>
<path d="M721.7 768.9 L725.9 767.5 L734.4 773.1 L740.0 778.7 L748.4 790.0" fill="none" stroke="#5f6061" stroke-width="1"/>
<path d="M737.2 776.6 L786.4 776.6 L787.1 759.1" fill="none" stroke="#5f6061" stroke-width="1"/>
<path d="M765.3 776.6 L764.6 791.4" fill="none" stroke="#5f6061" stroke-width="1"/>
<path d="M796.2 716.9 L804.7 716.9" fill="none" stroke="#5f6061" stroke-width="1"/>
<path d="M796.2 756.2 L799.0 764.7 L804.7 768.9" fill="none" stroke="#5f6061" stroke-width="1"/>
<path d="M709.2 569.2 L714.8 587.7 L724.0 602.5 L725.0 630.3" fill="none" stroke="#5f6061" stroke-width="1"/>
<path d="M729.6 593.3 L755.5 593.3 L764.7 584.0 L774.0 578.5 L786.9 582.2" fill="none" stroke="#5f6061" stroke-width="1"/>
<path d="M729.6 593.3 L727.7 630.3" fill="none" stroke="#5f6061" stroke-width="1"/>
<path d="M726.8 634.0 L726.8 670.9 L757.3 670.9 L757.3 656.1" fill="none" stroke="#5f6061" stroke-width="1"/>
<path d="M757.3 666.3 L777.6 666.3" fill="none" stroke="#5f6061" stroke-width="1"/>
<path d="M749.9 670.9 L737.0 685.7 L720.3 689.4 L718.5 693.1" fill="none" stroke="#5f6061" stroke-width="1"/>
<path d="M700.0 619.2 L718.5 619.2 L718.5 630.3" fill="none" stroke="#5f6061" stroke-width="1"/>
<path d="M744.4 576.6 L751.8 589.6 L755.5 593.3" fill="none" stroke="#5f6061" stroke-width="1"/>
<path d="M777.6 670.9 L774.0 685.7 L764.7 700.5" fill="none" stroke="#5f6061" stroke-width="1"/>
<path d="M181.7 6.0 L190.9 17.1 L198.3 35.5 L200.7 42.9 L200.7 70.6 L200.2 90.9 L196.5 102.0 L189.1 111.3 L186.3 124.2 L184.5 135.3 L176.2 144.5 L175.2 156.0" fill="none" stroke="#7f6a12" stroke-width="1"/>
<path d="M200.7 71.0 L213.1 67.9 L222.3 59.6 L226.0 52.2 L228.8 39.2 L228.8 22.6 L231.6 15.2 L240.8 6.9 L248.2 15.2 L248.2 20.8 L259.3 33.7 L263.0 42.9 L263.9 52.2 L268.5 58.6 L277.7 60.5 L288.8 61.0 L296.2 55.9 L307.3 54.4 L314.7 55.9 L322.1 61.4 L330.0 66.9" fill="none" stroke="#7f6a12" stroke-width="1"/>
<path d="M175.4 150.0 L174.5 157.4 L165.3 170.3 L156.0 185.1 L148.6 198.0 L145.3 204.5 L146.8 212.8 L151.4 222.9 L160.6 224.8" fill="none" stroke="#7f6a12" stroke-width="1"/>
<path d="M60.0 251.9 L71.1 247.9 L84.0 243.3 L109.9 234.9 L122.8 228.5 L135.7 224.8 L146.8 223.9 L160.6 224.8" fill="none" stroke="#7f6a12" stroke-width="1"/>
<path d="M160.6 224.8 L165.3 221.1 L172.7 221.7 L176.0 225.7 L174.5 230.3 L163.4 231.3 L160.6 229.4 L160.6 224.8" fill="none" stroke="#7f6a12" stroke-width="1"/>
<path d="M174.5 223.9 L189.3 215.6 L200.4 207.2 L215.1 199.9 L221.6 191.6 L235.4 184.2 L252.1 178.6 L260.0 177.3" fill="none" stroke="#7f6a12" stroke-width="1"/>
<path d="M164.3 231.3 L166.2 242.3 L169.0 260.8 L170.8 277.4 L173.0 287.6 L172.7 300.0" fill="none" stroke="#7f6a12" stroke-width="1"/>
<path d="M172.2 295.0 L171.3 309.8 L174.1 322.7 L176.8 335.6 L178.7 350.4 L182.4 363.3 L183.7 378.1 L180.5 394.7 L175.0 405.8 L168.5 420.6 L163.0 429.8 L161.1 445.0" fill="none" stroke="#7f6a12" stroke-width="1"/>
<path d="M6.0 461.2 L17.1 461.8 L33.7 464.0 L55.9 465.9 L72.5 469.5 L83.6 474.2 L92.8 476.9 L102.0 474.7 L116.8 473.6 L135.3 473.2 L143.6 476.9 L147.3 479.2 L153.7 479.7 L163.0 480.3 L179.6 479.2 L190.7 476.0 L206.0 475.1" fill="none" stroke="#7f6a12" stroke-width="1"/>
<path d="M162.6 440.0 L161.1 449.2 L156.5 462.2 L153.7 473.2 L151.9 482.5 L146.4 491.7 L140.8 502.8 L136.2 512.0 L133.4 528.6 L130.7 543.4 L129.7 569.3 L129.4 590.0" fill="none" stroke="#7f6a12" stroke-width="1"/>
<path d="M147.3 479.2 L148.2 473.2 L153.7 468.6" fill="none" stroke="#7f6a12" stroke-width="1"/>
<path d="M6.0 661.1 L15.2 660.3 L28.2 654.8 L42.9 649.6 L57.7 645.6 L68.8 643.2 L78.0 644.5 L87.3 645.0 L98.3 641.3 L109.4 640.4 L124.2 640.0 L135.3 640.0 L148.2 640.4 L159.3 644.1 L168.5 649.6 L177.7 654.8 L186.1 656.1 L194.4 656.1 L206.0 653.0" fill="none" stroke="#7f6a12" stroke-width="1"/>
<path d="M6.0 616.0 L10.6 620.1 L13.4 627.5 L12.5 638.6 L13.4 649.6 L15.2 660.3" fill="none" stroke="#7f6a12" stroke-width="1"/>
<path d="M129.4 585.0 L127.0 597.9 L126.0 612.7 L127.0 627.5 L130.1 640.4 L135.3 651.5 L136.7 657.9 L133.4 667.2 L132.5 675.5" fill="none" stroke="#7f6a12" stroke-width="1"/>
<path d="M87.3 645.0 L91.9 656.1 L98.3 664.4 L109.4 669.9 L120.5 672.7 L132.5 675.5 L142.7 681.0 L153.7 682.9 L161.1 685.6" fill="none" stroke="#7f6a12" stroke-width="1"/>
<path d="M161.1 685.6 L168.5 680.1 L177.7 668.1 L184.2 657.9 L186.1 647.8 L190.7 634.9 L196.2 621.9 L201.8 609.0 L206.0 601.6" fill="none" stroke="#7f6a12" stroke-width="1"/>
<path d="M300.0 54.4 L307.4 53.6 L313.9 55.9 L324.0 63.2 L336.9 72.5 L349.9 81.7 L362.8 90.9 L373.9 102.0 L381.3 108.5 L392.3 115.9 L399.7 121.4 L405.3 131.6" fill="none" stroke="#7f6a12" stroke-width="1"/>
<path d="M473.6 6.0 L472.7 17.1 L470.8 33.7 L466.2 44.8 L458.8 52.2 L447.7 56.8 L434.8 59.6 L429.3 70.6 L427.4 79.9 L421.9 90.9 L415.4 102.0 L409.9 112.2 L409.0 120.5 L405.3 131.6" fill="none" stroke="#7f6a12" stroke-width="1"/>
<path d="M394.2 99.8 L403.4 100.2 L414.5 102.0 L429.3 107.6 L435.7 113.1 L436.7 124.2 L437.6 133.4 L433.0 144.5 L429.3 156.0" fill="none" stroke="#7f6a12" stroke-width="1"/>
<path d="M394.2 99.8 L386.8 103.9 L379.4 109.4 L373.9 116.8 L368.3 126.0 L365.6 135.3 L366.5 144.5 L372.0 151.9 L373.9 156.0" fill="none" stroke="#7f6a12" stroke-width="1"/>
<path d="M405.3 131.6 L396.0 139.0 L386.8 142.7 L373.9 144.5 L360.9 147.3 L351.7 150.0 L344.3 156.0" fill="none" stroke="#7f6a12" stroke-width="1"/>
<path d="M405.3 135.3 L420.0 135.3 L437.6 132.5 L457.0 133.4 L469.9 137.1 L482.8 140.8 L492.1 137.1 L500.0 137.1" fill="none" stroke="#7f6a12" stroke-width="1"/>
<path d="M405.3 131.6 L406.2 142.7 L403.4 156.0" fill="none" stroke="#7f6a12" stroke-width="1"/>
<path d="M405.3 133.4 L410.8 142.7 L418.2 151.9 L421.9 156.0" fill="none" stroke="#7f6a12" stroke-width="1"/>
<path d="M588.6 6.0 L586.8 17.1 L588.6 26.3 L593.3 37.4 L599.7 41.1 L604.3 48.5 L604.3 61.4 L600.6 74.3 L599.7 83.6 L603.4 90.9 L604.3 96.5 L597.9 103.9 L590.5 110.3 L594.2 118.7 L597.9 127.9 L605.3 133.4 L610.8 139.0 L612.7 147.3 L618.2 148.2 L633.0 149.1 L647.7 149.1 L658.8 142.7 L669.9 133.4 L684.7 127.9 L700.0 120.5" fill="none" stroke="#7f6a12" stroke-width="1"/>
<path d="M500.0 137.5 L511.1 136.2 L518.5 138.0 L524.0 143.6 L536.9 150.0 L544.3 156.0" fill="none" stroke="#7f6a12" stroke-width="1"/>
<path d="M658.8 142.7 L664.4 150.0 L668.1 156.0" fill="none" stroke="#7f6a12" stroke-width="1"/>
<path d="M612.7 147.3 L609.0 156.0" fill="none" stroke="#7f6a12" stroke-width="1"/>
<path d="M690.3 126.0 L697.7 120.5 L709.5 115.3 L719.9 109.4 L731.7 102.0 L742.0 96.1 L752.4 92.4 L761.2 87.3 L771.6 81.3 L784.9 78.4 L793.7 75.4 L806.0 71.0" fill="none" stroke="#7f6a12" stroke-width="1"/>
<path d="M646.0 148.1 L653.4 145.9 L659.3 142.9 L668.2 136.3 L678.5 130.3 L690.3 125.9 L698.4 120.0" fill="none" stroke="#7f6a12" stroke-width="1"/>
<path d="M659.3 142.9 L665.2 149.5 L671.1 154.0 L673.3 162.8 L680.0 168.8 L684.4 174.7 L685.9 182.0 L690.3 187.2 L696.2 189.4 L705.1 189.7 L715.4 188.7 L722.8 188.0 L730.2 185.0 L740.5 182.8 L752.4 180.6 L762.7 179.8 L768.6 176.9 L779.0 174.7 L796.7 172.4 L806.0 175.4" fill="none" stroke="#7f6a12" stroke-width="1"/>
<path d="M715.4 188.7 L719.9 196.8 L725.8 204.2 L731.7 211.6 L736.1 216.0 L743.5 216.0 L747.9 221.9 L752.4 229.3 L756.8 240.0" fill="none" stroke="#7f6a12" stroke-width="1"/>
<path d="M759.8 240.0 L771.6 233.8 L786.3 228.6 L806.0 221.9" fill="none" stroke="#7f6a12" stroke-width="1"/>
<path d="M500.0 246.0 L505.5 238.6 L514.8 234.9 L522.2 236.8 L529.5 231.3 L540.6 222.0 L553.6 209.1 L564.6 194.3 L577.6 177.7 L586.8 166.6 L594.2 160.2 L603.4 157.4 L614.5 151.8 L618.2 150.0" fill="none" stroke="#7f6a12" stroke-width="1"/>
<path d="M535.1 150.0 L548.0 157.4 L570.2 157.4 L581.3 161.1 L594.2 160.2" fill="none" stroke="#7f6a12" stroke-width="1"/>
<path d="M522.2 236.8 L527.7 244.2 L535.1 249.7 L536.9 260.8 L539.7 270.0 L543.4 279.3 L544.3 290.4 L549.9 300.0" fill="none" stroke="#7f6a12" stroke-width="1"/>
<path d="M665.3 150.0 L671.7 153.7 L673.6 162.9 L682.8 170.3 L684.7 177.7 L688.4 185.1 L695.8 188.8 L700.0 187.9" fill="none" stroke="#7f6a12" stroke-width="1"/>
<path d="M581.3 293.1 L584.0 295.9 L582.2 300.0" fill="none" stroke="#7f6a12" stroke-width="1"/>
<path d="M403.4 150.0 L401.2 164.8 L397.9 174.0 L396.4 186.9 L397.9 205.4 L398.8 223.9 L397.9 238.6 L394.2 253.4 L393.3 268.2 L396.0 279.3 L397.0 300.0" fill="none" stroke="#7f6a12" stroke-width="1"/>
<path d="M300.0 164.8 L311.1 161.1 L322.2 160.2 L335.1 159.2 L344.3 154.6 L353.6 150.0" fill="none" stroke="#7f6a12" stroke-width="1"/>
<path d="M371.1 150.0 L377.6 158.3 L386.8 163.9 L401.2 164.8 L414.5 162.0 L427.4 158.3 L430.2 153.7 L430.2 150.0" fill="none" stroke="#7f6a12" stroke-width="1"/>
<path d="M420.0 150.0 L427.4 158.3 L436.7 170.3 L445.9 185.1 L458.8 198.0 L471.7 212.8 L477.3 223.9 L484.7 231.3 L492.1 234.9 L500.0 236.8" fill="none" stroke="#7f6a12" stroke-width="1"/>
<path d="M500.0 260.8 L495.8 264.5 L488.4 277.4 L481.0 290.4 L475.4 300.0" fill="none" stroke="#7f6a12" stroke-width="1"/>
<path d="M302.5 445.0 L316.3 431.7 L329.3 418.7 L336.7 409.5 L344.0 402.1 L357.0 400.3 L368.1 399.3 L377.3 394.7 L384.7 389.2 L390.2 379.9 L395.8 372.6 L400.0 369.8" fill="none" stroke="#7f6a12" stroke-width="1"/>
<path d="M384.7 386.4 L392.1 385.5 L400.0 385.1" fill="none" stroke="#7f6a12" stroke-width="1"/>
<path d="M395.8 298.7 L397.6 313.5 L399.4 331.9 L400.0 335.6" fill="none" stroke="#7f6a12" stroke-width="1"/>
<path d="M307.1 440.0 L299.7 449.2 L292.3 458.5 L281.3 467.7 L270.2 470.5 L260.9 474.2 L246.2 474.2 L218.5 475.1 L207.4 476.0 L200.0 475.1" fill="none" stroke="#7f6a12" stroke-width="1"/>
<path d="M260.9 474.2 L253.6 480.6 L249.9 491.7 L246.2 502.8 L236.9 515.7 L236.0 524.9 L227.7 536.0 L218.5 549.0 L214.8 561.9 L215.7 573.0 L211.1 590.0" fill="none" stroke="#7f6a12" stroke-width="1"/>
<path d="M345.9 590.0 L357.0 582.2 L371.7 571.1 L384.7 561.9 L392.1 550.8 L400.0 543.4" fill="none" stroke="#7f6a12" stroke-width="1"/>
<path d="M409.4 530.0 L403.9 539.2 L394.6 550.3 L383.6 561.4 L370.6 572.5 L357.7 583.6 L341.1 592.8 L330.0 598.3 L318.9 602.9" fill="none" stroke="#7f6a12" stroke-width="1"/>
<path d="M477.6 295.0 L470.2 304.2 L464.6 315.3 L459.1 324.5 L451.7 331.9 L440.6 339.3 L427.7 348.6 L418.5 357.8 L412.9 367.0 L407.4 376.3 L403.7 381.8 L400.0 385.5" fill="none" stroke="#7f6a12" stroke-width="1"/>
<path d="M412.9 367.0 L427.7 364.3 L448.0 363.3 L473.9 363.7 L492.3 359.6 L512.7 355.0 L533.0 352.6 L555.1 352.2" fill="none" stroke="#7f6a12" stroke-width="1"/>
<path d="M400.0 337.5 L402.8 350.4 L401.8 365.2 L406.5 378.1 L403.7 391.0 L405.5 404.0 L411.1 416.9 L418.5 431.7 L424.0 445.0" fill="none" stroke="#7f6a12" stroke-width="1"/>
<path d="M581.9 355.9 L577.3 365.2 L566.2 372.6 L557.0 381.8 L552.4 394.7 L545.9 404.0 L538.5 415.0 L529.3 424.3 L520.0 435.4 L512.7 445.0" fill="none" stroke="#7f6a12" stroke-width="1"/>
<path d="M545.9 295.0 L551.4 302.4 L557.0 309.8 L558.8 319.0 L569.9 326.4" fill="none" stroke="#7f6a12" stroke-width="1"/>
<path d="M655.9 300.3 L666.9 292.9 L679.9 285.5 L689.1 281.8 L698.3 280.0" fill="none" stroke="#7f6a12" stroke-width="1"/>
<path d="M665.1 368.3 L685.4 368.6 L702.0 371.4 L716.8 370.9 L735.3 371.4 L751.9 372.9 L759.3 368.6 L768.5 363.1 L779.6 358.5 L790.7 352.9 L799.9 344.6 L806.0 339.1" fill="none" stroke="#7f6a12" stroke-width="1"/>
<path d="M796.2 306.0 L806.0 312.3" fill="none" stroke="#7f6a12" stroke-width="1"/>
<path d="M625.4 420.4 L628.2 422.2 L633.7 430.0" fill="none" stroke="#7f6a12" stroke-width="1"/>
<path d="M628.2 425.0 L631.9 430.5 L633.7 436.1 L630.9 443.5 L630.0 461.9 L629.1 480.4 L629.1 498.9 L631.9 513.6 L637.4 528.4 L644.8 541.3 L648.5 554.3 L652.2 575.0" fill="none" stroke="#7f6a12" stroke-width="1"/>
<path d="M635.5 425.0 L644.8 434.2 L650.3 445.3 L666.9 452.7 L683.6 460.1 L707.6 466.6 L731.6 469.3 L759.3 472.6 L772.2 478.6 L785.1 484.1 L798.1 486.9 L806.0 493.3" fill="none" stroke="#7f6a12" stroke-width="1"/>
<path d="M633.7 436.1 L639.2 430.5" fill="none" stroke="#7f6a12" stroke-width="1"/>
<path d="M806.0 535.8 L802.7 543.2 L801.8 554.3 L799.0 567.2 L798.1 575.0" fill="none" stroke="#7f6a12" stroke-width="1"/>
<path d="M423.5 440.0 L426.3 449.2 L431.9 460.3 L439.2 470.5 L440.2 473.2" fill="none" stroke="#7f6a12" stroke-width="1"/>
<path d="M440.2 473.2 L450.3 474.2 L461.4 472.3 L472.5 467.7 L487.3 463.1 L498.3 456.6 L509.4 449.2 L516.8 440.0" fill="none" stroke="#7f6a12" stroke-width="1"/>
<path d="M440.2 473.2 L435.5 484.3 L430.0 495.4 L424.5 508.3 L415.2 521.3 L406.0 534.2" fill="none" stroke="#7f6a12" stroke-width="1"/>
<path d="M575.5 347.3 L576.2 339.9 L581.4 334.7 L588.8 334.7 L593.2 336.2 L593.9 344.3 L595.4 351.7 L590.2 356.2 L582.9 358.4 L576.9 360.6 L575.5 354.7 L575.5 347.3" fill="none" stroke="#7f6a12" stroke-width="1"/>
<path d="M582.9 351.0 L580.6 342.9 L577.7 335.5 L574.0 331.0 L570.3 325.1 L573.2 311.8 L576.9 304.4 L581.4 300.0 L585.1 294.8" fill="none" stroke="#7f6a12" stroke-width="1"/>
<path d="M582.9 351.0 L584.3 342.9 L591.7 336.2 L602.1 331.0 L610.9 322.9 L624.2 318.5 L636.1 314.8 L646.4 308.9 L655.3 303.0 L660.0 300.0" fill="none" stroke="#7f6a12" stroke-width="1"/>
<path d="M554.8 351.0 L563.6 348.0 L575.5 347.3 L582.9 351.0" fill="none" stroke="#7f6a12" stroke-width="1"/>
<path d="M582.9 351.0 L590.2 352.5 L605.0 353.2 L612.4 359.1 L622.8 361.3 L634.6 361.3 L649.4 365.0 L660.0 367.2" fill="none" stroke="#7f6a12" stroke-width="1"/>
<path d="M582.9 351.0 L582.9 359.1 L590.2 365.0 L596.2 372.4 L602.1 381.3 L605.0 391.6 L609.5 402.0 L616.8 410.8 L624.2 418.2 L625.7 420.0" fill="none" stroke="#7f6a12" stroke-width="1"/>
<path d="M593.2 336.2 L593.2 342.9 L595.4 351.7" fill="none" stroke="#7f6a12" stroke-width="1"/>
<path d="M582.9 359.1 L587.3 358.4 L591.0 365.0" fill="none" stroke="#7f6a12" stroke-width="1"/>
<path d="M6.0 257.2 L33.7 256.1 L61.4 252.0" fill="none" stroke="#7f6a12" stroke-width="1"/>
<path d="M259.6 177.1 L283.6 168.9 L300.2 164.9" fill="none" stroke="#7f6a12" stroke-width="1"/>
<path d="M698.3 279.7 L713.1 272.3 L722.3 265.0 L726.0 258.5 L735.3 253.9 L746.4 248.3 L759.3 240.9" fill="none" stroke="#7f6a12" stroke-width="1"/>
<path d="M739.0 253.9 L740.8 261.3 L751.9 270.5 L763.0 279.7 L772.2 283.4 L783.3 290.8 L792.5 301.9 L796.2 306.0" fill="none" stroke="#7f6a12" stroke-width="1"/>
<path d="M759.3 237.3 L763.0 252.0 L766.7 266.8 L770.4 281.6" fill="none" stroke="#7f6a12" stroke-width="1"/>
<path d="M206.5 652.6 L216.8 648.9 L228.6 645.9 L243.4 642.2 L252.3 643.0 L265.6 645.9 L280.3 642.2" fill="none" stroke="#7f6a12" stroke-width="1"/>
<path d="M280.0 642.8 L285.9 639.9 L294.8 636.9 L302.2 631.0 L305.9 627.3 L311.8 622.2 L319.9 624.4 L328.8 625.1 L342.0 627.3 L349.4 631.0 L359.8 633.2 L365.7 637.7 L371.6 638.7 L379.0 636.2 L384.9 635.5 L389.3 630.3 L396.7 624.4 L405.6 620.7 L420.3 618.5 L440.0 618.5" fill="none" stroke="#7f6a12" stroke-width="1"/>
<path d="M305.9 627.3 L305.1 619.2 L308.1 608.9 L314.0 603.7 L320.6 600.0" fill="none" stroke="#7f6a12" stroke-width="1"/>
<path d="M430.0 619.2 L437.4 617.7 L444.0 616.3 L452.2 620.7 L464.0 621.4 L472.8 617.7 L478.8 614.8 L489.1 615.5 L499.4 617.4 L506.8 617.0 L514.9 615.5 L523.1 618.5 L533.4 623.6 L542.3 626.6 L551.1 628.1 L560.0 631.8 L570.3 635.5 L580.7 639.6 L590.0 640.2" fill="none" stroke="#7f6a12" stroke-width="1"/>
<path d="M580.0 639.9 L587.4 639.9 L594.0 638.5 L602.2 640.7 L611.0 639.9 L619.9 641.4 L630.2 643.6 L642.0 645.9 L652.4 645.1 L658.3 648.1 L668.6 651.0 L677.5 653.2 L686.4 652.5 L693.8 656.9 L702.6 659.1 L710.0 661.4 L721.8 660.6 L740.0 660.6" fill="none" stroke="#7f6a12" stroke-width="1"/>
<path d="M667.9 620.0 L674.5 628.9 L683.4 639.2 L692.3 643.6 L698.2 651.0 L702.6 658.4 L710.0 667.3 L714.4 677.6 L718.9 688.0 L721.8 699.8 L726.3 708.6 L733.6 719.0 L740.0 729.3 L734.4 719.7 L740.0 728.1 L744.2 736.6 L747.0 746.4 L747.7 759.1 L749.8 767.5 L753.3 775.9 L754.7 784.4 L754.7 792.1" fill="none" stroke="#7f6a12" stroke-width="1"/>
<path d="M799.8 560.0 L796.1 571.1 L788.7 585.9 L785.0 597.0 L785.0 615.5 L787.8 630.3 L788.4 643.2 L786.9 656.1 L790.6 663.5 L796.1 672.8 L801.7 682.0 L805.4 693.1" fill="none" stroke="#7f6a12" stroke-width="1"/>
<path d="M739.9 660.6 L755.5 658.0 L774.0 655.8 L785.0 654.7" fill="none" stroke="#7f6a12" stroke-width="1"/>
<path d="M781.3 645.0 L777.6 652.4 L777.6 661.7 L781.3 666.3 L792.4 668.2 L794.3 670.9" fill="none" stroke="#7f6a12" stroke-width="1"/>
<path d="M786.0 652.4 L785.0 656.1 L786.9 663.5 L784.1 669.1 L780.4 672.8 L786.0 670.9 L786.9 678.3 L790.6 685.7 L792.4 693.1 L794.3 700.5 L792.4 710.1 L796.2 704.2 L790.6 707.0 L788.5 709.8 L790.6 712.7 L790.6 716.9 L785.0 720.4 L783.6 725.3 L784.3 732.3" fill="none" stroke="#000" stroke-width="4" stroke-linejoin="round"/><path d="M786.0 652.4 L785.0 656.1 L786.9 663.5 L784.1 669.1 L780.4 672.8 L786.0 670.9 L786.9 678.3 L790.6 685.7 L792.4 693.1 L794.3 700.5 L792.4 710.1 L796.2 704.2 L790.6 707.0 L788.5 709.8 L790.6 712.7 L790.6 716.9 L785.0 720.4 L783.6 725.3 L784.3 732.3" fill="none" stroke="#004263" stroke-width="2" stroke-linejoin="round"/>
<path d="M6.0 105.4 L154.7 105.4 L156.0 111.3 L160.8 114.0 L161.5 116.8 L159.3 121.4 L158.9 124.2 L153.7 129.4 L149.1 135.3 L144.1 139.3 L138.0 149.1 L187.9 149.1" fill="none" stroke="#000" stroke-width="1"/>
<path d="M203.9 6.0 L201.7 11.5 L206.6 17.1 L208.5 26.3 L207.6 29.6 L202.9 31.9 L201.7 35.5 L205.7 38.9 L208.5 45.7 L212.2 52.2 L213.1 56.2 L217.7 58.1 L220.5 60.5" fill="none" stroke="#000" stroke-width="1"/>
<path d="M310.1 6.0 L309.1 11.5 L307.3 17.1 L301.7 19.9 L287.0 22.3 L280.5 25.4 L276.8 31.9 L277.7 38.3 L282.4 42.9 L283.3 49.4 L279.6 54.0 L275.0 54.4 L269.4 50.0 L263.0 47.6 L257.4 43.9 L250.0 41.1 L244.5 39.2 L239.0 40.2 L233.4 45.7 L227.9 52.2 L225.1 56.8 L221.4 60.5" fill="none" stroke="#000" stroke-width="1"/>
<path d="M221.4 60.5 L226.0 59.6 L231.2 61.4 L232.5 66.9 L229.7 73.4 L227.0 76.2 L231.2 79.9 L229.7 83.6 L226.0 85.4 L227.9 90.0 L225.1 96.5 L221.4 98.3 L217.7 94.6 L214.0 92.4 L211.3 98.3 L209.4 106.6 L204.8 107.6 L203.9 102.0 L201.1 97.8 L198.0 100.2 L198.7 103.9 L202.0 105.7 L201.1 111.3 L202.0 116.8 L198.3 120.5 L194.3 121.4 L195.6 124.2 L200.2 125.1 L198.3 127.0 L190.0 127.0 L189.1 128.8 L193.7 133.4 L196.5 137.1 L191.9 139.9 L188.2 146.4 L187.2 149.1 L190.9 156.0" fill="none" stroke="#000" stroke-width="1"/>
<path d="M209.4 104.8 L264.8 104.8 L311.9 105.4 L312.8 98.3 L309.5 92.8 L309.5 89.1 L323.9 89.5 L324.8 91.7 L330.0 91.9" fill="none" stroke="#000" stroke-width="1"/>
<path d="M187.4 150.0 L189.3 152.8 L192.6 156.5 L189.3 160.2 L185.6 159.2 L187.4 163.9 L184.7 166.3 L180.0 167.5 L176.3 171.2 L171.7 171.2 L169.9 174.9 L171.7 179.5 L175.4 179.5 L176.0 182.9 L172.3 186.0 L172.7 191.6 L169.9 189.7 L167.1 187.9 L163.4 189.7 L161.2 196.2 L157.9 198.4 L154.6 199.9 L153.3 203.2 L157.0 204.5 L160.6 202.6 L159.7 205.4 L156.0 209.1 L153.8 213.7 L156.0 217.4 L159.7 218.3 L159.7 222.9 L157.0 225.7 L153.3 226.6 L152.3 232.2 L150.5 234.9 L144.9 234.9 L143.1 238.6 L146.8 242.3 L146.4 247.9 L141.3 251.6 L135.7 252.5 L132.9 247.9 L130.2 248.8 L131.1 254.3 L127.4 256.2 L124.6 261.7 L128.3 260.8 L131.1 259.9 L123.7 265.4 L127.4 270.0 L131.1 266.3 L124.3 271.9 L125.0 277.4 L122.8 280.2 L123.7 288.5 L120.9 292.2 L115.4 294.0 L109.9 295.9 L108.9 300.0" fill="none" stroke="#000" stroke-width="1"/>
<path d="M144.9 238.6 L260.0 238.6" fill="none" stroke="#000" stroke-width="1"/>
<path d="M108.9 300.0 L105.7 302.4 L101.1 305.2 L97.4 306.1 L98.3 308.9 L103.0 309.8 L105.7 312.5 L102.0 315.3 L97.4 313.5 L95.6 316.8 L100.2 319.0 L101.1 322.7 L97.4 326.4 L90.9 328.2 L85.4 329.7 L87.3 331.9 L92.8 331.0 L90.9 334.7 L86.3 339.3 L87.3 343.4 L91.9 344.9 L90.9 348.2 L84.5 346.7 L80.8 348.6 L81.7 354.1 L87.3 356.9 L89.1 354.1 L84.5 352.2 L78.9 353.2 L74.7 355.9 L77.1 358.7 L81.7 360.6 L80.8 364.3 L75.3 366.1 L77.1 370.7 L81.7 372.6 L78.9 376.3 L74.7 375.3 L78.0 379.0 L83.6 381.8 L87.3 377.2 L83.6 375.3 L81.7 381.8 L79.9 387.3 L83.6 393.8 L88.2 392.0 L85.4 390.1 L84.5 395.6 L85.4 402.1 L79.9 404.0 L76.5 406.7 L78.9 410.4 L81.7 413.2 L78.9 416.0 L76.2 420.6 L78.9 424.3 L81.3 421.5 L80.8 417.8 L84.5 417.8 L86.3 422.4 L84.5 428.0 L79.9 432.6 L79.9 438.1 L85.4 440.9 L87.3 445.0" fill="none" stroke="#000" stroke-width="1"/>
<path d="M6.0 415.4 L79.9 415.4" fill="none" stroke="#000" stroke-width="1"/>
<path d="M87.3 445.0 L82.6 445.5 L80.2 449.2 L83.6 452.0 L90.0 451.1 L90.9 448.3 L87.3 447.4 L84.5 453.9 L83.2 460.3 L87.3 464.9 L92.8 463.1 L90.0 460.3 L87.3 459.4 L92.8 466.8 L97.4 469.5 L99.3 474.2 L100.2 471.4 L98.3 476.9 L92.8 479.7 L91.9 484.3 L85.4 485.2 L79.9 487.1 L78.9 492.6 L83.6 495.4 L90.0 494.5 L90.9 490.8 L88.2 489.9 L87.3 497.2 L84.5 503.7 L78.9 507.4 L74.3 512.9 L69.7 517.6 L66.0 519.4 L67.9 523.1 L72.5 521.3 L70.6 518.5 L66.9 522.2 L64.7 525.9 L69.7 527.7 L71.6 524.9 L63.2 526.8 L61.4 532.3 L61.4 537.9 L55.9 537.0 L53.6 538.8 L56.8 541.6 L61.4 541.2 L59.6 546.2 L54.9 549.0 L50.3 552.7 L47.6 558.2 L51.2 561.0 L55.9 559.1 L54.9 555.4 L51.2 556.3 L52.2 563.7 L54.0 568.3 L50.3 570.7 L43.9 570.7 L45.7 576.7 L47.6 582.2 L44.8 581.3 L45.7 585.9 L49.4 590.0" fill="none" stroke="#000" stroke-width="1"/>
<path d="M49.4 590.0 L50.3 593.3 L44.8 594.2 L186.1 594.2 L185.1 599.8 L183.3 604.4 L179.6 610.9 L177.7 620.1 L178.7 626.6 L181.4 633.9 L187.9 640.4 L190.7 649.6 L193.4 657.9 L195.3 666.3" fill="none" stroke="#000" stroke-width="1"/>
<path d="M324.9 91.9 L355.4 91.9 L383.1 91.3 L420.0 90.6 L447.7 91.9 L500.0 94.6" fill="none" stroke="#000" stroke-width="1"/>
<path d="M500.0 94.6 L527.7 94.3 L573.9 96.1 L603.4 96.9 L634.8 96.9 L666.2 96.5 L700.0 96.5" fill="none" stroke="#000" stroke-width="1"/>
<path d="M635.7 96.5 L640.4 92.8 L647.7 90.0 L657.0 87.3 L666.2 85.0 L676.4 82.6 L678.2 78.0 L682.8 74.3 L692.1 71.6 L696.7 68.8 L697.6 61.4 L700.0 59.6" fill="none" stroke="#000" stroke-width="1"/>
<path d="M646.0 90.2 L654.9 89.5 L660.8 86.5 L668.2 84.3 L676.3 82.8 L677.8 78.4 L681.5 74.0 L688.8 72.5 L696.2 69.5 L697.0 62.1 L700.7 59.2 L706.6 56.2 L708.0 49.6 L715.4 44.4 L724.3 40.0 L731.7 36.3 L739.1 33.3 L746.5 26.7 L752.4 20.8 L758.3 15.6 L762.7 13.4" fill="none" stroke="#000" stroke-width="1"/>
<path d="M747.9 6.0 L752.4 9.7 L758.3 11.9 L764.2 11.9 L766.4 14.1 L762.7 14.9 L762.7 19.3 L766.4 22.3 L766.4 26.7 L771.6 31.9 L776.0 34.8 L780.4 35.5 L784.9 40.7 L790.8 42.2 L798.2 40.0 L802.6 37.0 L806.0 32.6" fill="none" stroke="#000" stroke-width="1"/>
<path d="M646.0 95.8 L668.2 96.1 L705.1 96.4 L742.0 96.4 L765.7 96.1 L766.4 94.3 L787.8 94.3 L787.8 95.4 L796.7 95.8 L806.0 98.3" fill="none" stroke="#000" stroke-width="1"/>
<path d="M787.8 94.6 L783.4 98.3 L782.7 103.5 L781.9 109.4 L780.4 115.3 L781.9 119.0 L776.0 117.5 L770.1 120.5 L765.7 126.0" fill="none" stroke="#000" stroke-width="1"/>
<path d="M770.8 120.0 L767.1 123.7 L764.2 128.9 L761.2 134.8 L758.3 138.5 L752.4 139.2 L749.4 136.3 L745.0 135.5 L740.5 137.7 L733.2 139.2 L728.7 143.6 L725.8 148.8 L719.9 152.5 L715.4 151.0 L716.9 146.6 L714.0 143.6 L709.5 145.1 L705.1 148.1 L700.7 154.7 L696.2 154.0 L693.3 156.9 L693.3 162.8 L688.8 167.3 L681.5 167.3 L675.5 170.2 L668.2 175.4 L660.8 179.1 L654.9 182.0 L649.0 188.7 L646.0 187.2" fill="none" stroke="#000" stroke-width="1"/>
<path d="M675.5 238.2 L690.3 233.8 L703.6 230.8 L709.5 226.4 L716.9 224.9 L724.3 221.9 L730.2 219.7 L733.2 221.9 L740.5 220.5 L752.4 220.5 L771.6 221.2 L793.7 222.7 L806.0 223.4" fill="none" stroke="#000" stroke-width="1"/>
<path d="M500.0 239.2 L588.6 239.2 L658.8 239.2 L679.1 238.6" fill="none" stroke="#000" stroke-width="1"/>
<path d="M647.7 188.4 L640.4 186.9 L629.3 188.8 L620.0 193.4 L612.7 198.9 L609.9 205.4 L609.9 210.9 L607.1 213.7 L599.7 215.6 L596.0 214.6 L590.5 218.3 L589.6 227.6 L588.6 239.2" fill="none" stroke="#000" stroke-width="1"/>
<path d="M679.1 238.6 L677.3 244.2 L669.9 247.9 L664.4 255.3 L660.7 260.8 L662.5 268.2 L669.9 272.8 L675.4 275.6 L681.0 281.1 L688.4 283.9 L693.9 284.8 L697.6 290.4 L700.0 295.9" fill="none" stroke="#000" stroke-width="1"/>
<path d="M259.9 238.6 L300.0 236.8 L336.9 237.7 L392.3 238.3 L447.7 238.6 L500.0 239.2" fill="none" stroke="#000" stroke-width="1"/>
<path d="M300.0 239.2 L307.4 246.0 L305.5 268.2 L302.8 300.0" fill="none" stroke="#000" stroke-width="1"/>
<path d="M492.1 239.2 L493.9 246.0 L496.7 260.8 L498.5 275.6 L500.0 283.0" fill="none" stroke="#000" stroke-width="1"/>
<path d="M302.5 295.0 L297.9 331.9 L294.2 368.9 L290.5 405.8 L286.4 445.0" fill="none" stroke="#000" stroke-width="1"/>
<path d="M286.8 440.0 L283.1 476.9 L279.8 510.2 L280.3 541.6 L282.2 573.0 L283.1 590.0 L284.0 600.7" fill="none" stroke="#000" stroke-width="1"/>
<path d="M535.9 594.3 L344.8 594.3 L345.1 600.2 L341.4 605.7 L343.9 608.5" fill="none" stroke="#000" stroke-width="1"/>
<path d="M499.9 283.0 L502.5 295.0 L507.1 322.7 L512.7 355.9 L518.2 387.3 L522.8 415.0 L525.6 431.7 L529.3 440.9 L530.2 445.0" fill="none" stroke="#000" stroke-width="1"/>
<path d="M679.9 280.0 L685.4 284.6 L694.6 284.6 L698.3 291.1 L702.0 298.5 L706.6 304.0 L706.6 311.4 L713.1 318.8 L716.8 326.2 L720.5 331.7 L729.7 337.2 L737.1 342.8 L742.7 348.3 L744.5 355.7 L750.0 363.1 L757.4 364.9 L761.1 370.5 L766.7 376.0 L765.7 383.4 L770.4 389.0 L774.1 394.5 L778.7 398.2 L779.6 403.7 L787.0 407.4 L794.4 411.1 L798.1 416.7 L799.9 425.9 L801.8 430.0" fill="none" stroke="#000" stroke-width="1"/>
<path d="M799.0 425.0 L801.8 430.5 L804.5 437.9 L806.0 443.5" fill="none" stroke="#000" stroke-width="1"/>
<path d="M528.8 440.0 L531.6 447.4 L535.3 452.9 L538.0 460.3 L539.9 467.7 L538.0 475.1 L544.5 480.6 L543.6 485.2 L537.1 488.0 L533.4 493.6 L533.4 500.9 L531.6 513.9 L530.1 519.4 L532.5 538.8 L533.8 550.8 L531.6 561.9 L529.7 576.7 L535.3 585.9 L536.2 590.0 L540.1 601.0" fill="none" stroke="#000" stroke-width="1"/>
<path d="M284.1 600.0 L285.2 648.8" fill="none" stroke="#000" stroke-width="1"/>
<path d="M344.3 600.0 L341.3 605.9 L348.0 613.3 L350.9 618.5 L358.3 622.2 L359.8 626.6 L359.0 632.5 L355.3 634.7 L356.1 639.9 L358.3 644.3" fill="none" stroke="#000" stroke-width="1"/>
<path d="M548.2 619.9 L590.0 622.2 L580.0 621.2 L624.3 624.1 L668.6 627.4 L713.0 630.0 L740.0 631.5 L722.2 631.2 L744.4 632.1 L745.3 639.5 L746.2 646.9 L749.0 651.0 L757.3 651.0 L759.2 645.0 L760.6 634.0 L758.2 624.7 L757.7 615.5 L762.9 609.9 L768.4 609.5 L774.0 612.7 L781.3 615.1 L786.9 616.4" fill="none" stroke="#000" stroke-width="1"/>
<path d="M249.3 678.7 L253.0 682.8 L254.0 688.8 L253.8 694.7 L252.3 700.6 L249.3 706.5 L245.6 711.7 L241.9 715.3 L239.0 716.8" fill="none" stroke="#000" stroke-width="1"/>
<path d="M236.8 722.0 L233.1 725.7" fill="none" stroke="#000" stroke-width="1"/>
<path d="M227.9 727.9 L223.5 730.9" fill="none" stroke="#000" stroke-width="1"/>
<path d="M250.1 692.4 L245.6 695.4 L241.9 700.6" fill="none" stroke="#000" stroke-width="1"/>
<path d="M228.6 663.6 L234.5 662.2" fill="none" stroke="#000" stroke-width="1"/>
<path d="M241.9 664.4 L249.3 662.2" fill="none" stroke="#000" stroke-width="1"/>
<path d="M258.2 661.4 L268.5 662.9 L281.8 664.4" fill="none" stroke="#000" stroke-width="1"/>
<path d="M506.1 694.5 L507.6 703.4 L511.3 713.0" fill="none" stroke="#000" stroke-width="1"/>
<path d="M303.6 659.1 L309.5 660.6 L311.8 665.0" fill="none" stroke="#000" stroke-width="1"/>
<circle cx="407" cy="407" r="159.3" fill="none" stroke="#dadada" stroke-width="0.85" shape-rendering="geometricPrecision"/>
<circle cx="407" cy="407" r="279.2" fill="none" stroke="#dadada" stroke-width="0.85" shape-rendering="geometricPrecision"/>
<circle cx="407" cy="407" r="399" fill="none" stroke="#dadada" stroke-width="0.85" shape-rendering="geometricPrecision"/>
<circle cx="407" cy="407" r="518.8" fill="none" stroke="#dadada" stroke-width="0.85" shape-rendering="geometricPrecision"/>
<circle cx="407" cy="407" r="39.5" fill="none" stroke="#ff0000" stroke-width="1.15" shape-rendering="geometricPrecision"/>
<rect x="397.5" y="366.0" width="16.4" height="3" fill="#5d4f4b"/>
<text x="398.5" y="370.9" font-size="10.8" fill="#ffff99" shape-rendering="auto" font-family='"Liberation Mono","DejaVu Sans Mono",monospace' textLength="14.4" lengthAdjust="spacingAndGlyphs">31</text>
<rect x="393.9" y="246.2" width="23.6" height="3" fill="#5d4f4b"/>
<text x="394.9" y="251.1" font-size="10.8" fill="#ffff99" shape-rendering="auto" font-family='"Liberation Mono","DejaVu Sans Mono",monospace' textLength="21.6" lengthAdjust="spacingAndGlyphs">125</text>
<rect x="393.9" y="126.30000000000001" width="23.6" height="3" fill="#5d4f4b"/>
<text x="394.9" y="131.2" font-size="10.8" fill="#ffff99" shape-rendering="auto" font-family='"Liberation Mono","DejaVu Sans Mono",monospace' textLength="21.6" lengthAdjust="spacingAndGlyphs">219</text>
<rect x="393.9" y="6.5" width="23.6" height="3" fill="#5d4f4b"/>
<text x="394.9" y="11.4" font-size="10.8" fill="#ffff99" shape-rendering="auto" font-family='"Liberation Mono","DejaVu Sans Mono",monospace' textLength="21.6" lengthAdjust="spacingAndGlyphs">313</text>
<g shape-rendering="auto">
<circle cx="763.5" cy="76.5" r="4" fill="none" stroke="#e8820a" stroke-width="1.2"/><path d="M761.0 76.5H766.0" stroke="#e8820a" stroke-width="1.2" fill="none"/><path d="M763.5 74.0V79.0" stroke="#e8820a" stroke-width="1.2" fill="none"/>
<circle cx="686.5" cy="142.5" r="4" fill="none" stroke="#f4ee00" stroke-width="1.2"/><path d="M684.0 142.5H689.0" stroke="#f4ee00" stroke-width="1.2" fill="none"/><path d="M686.5 140.0V145.0" stroke="#f4ee00" stroke-width="1.2" fill="none"/>
<circle cx="686.5" cy="164.5" r="4" fill="none" stroke="#f0c400" stroke-width="1.2"/><path d="M684.0 164.5H689.0" stroke="#f0c400" stroke-width="1.2" fill="none"/><path d="M686.5 162.0V167.0" stroke="#f0c400" stroke-width="1.2" fill="none"/>
<circle cx="781.5" cy="429.5" r="4" fill="none" stroke="#00e8e8" stroke-width="1.2"/><path d="M779.0 429.5H784.0" stroke="#00e8e8" stroke-width="1.2" fill="none"/><path d="M781.5 427.0V432.0" stroke="#00e8e8" stroke-width="1.2" fill="none"/>
</g>
</g>
<rect x="8.5" y="758.5" width="244" height="45" fill="#000" stroke="#9a9a9a"/>
<rect x="9.5" y="759.5" width="242" height="43" fill="none" stroke="#4a4a4a"/>
<text x="13.3" y="770.5" font-size="10.5" fill="#f0f0f0" font-family='"DejaVu Sans Condensed","Liberation Sans",sans-serif' textLength="35.6" lengthAdjust="spacingAndGlyphs">Symbols</text>
<text x="53" y="770.5" font-size="10.5" fill="#f0f0f0" font-family='"DejaVu Sans Condensed","Liberation Sans",sans-serif' textLength="17.4" lengthAdjust="spacingAndGlyphs">-CG</text>
<text x="77.7" y="770.5" font-size="10.5" fill="#f0f0f0" font-family='"DejaVu Sans Condensed","Liberation Sans",sans-serif' textLength="14.6" lengthAdjust="spacingAndGlyphs">-IC</text>
<text x="98.7" y="770.5" font-size="10.5" fill="#f0f0f0" font-family='"DejaVu Sans Condensed","Liberation Sans",sans-serif' textLength="20.6" lengthAdjust="spacingAndGlyphs">+CG</text>
<text x="123.8" y="770.5" font-size="10.5" fill="#f0f0f0" font-family='"DejaVu Sans Condensed","Liberation Sans",sans-serif' textLength="17.8" lengthAdjust="spacingAndGlyphs">+IC</text>
<text x="153" y="770.5" font-size="10.5" fill="#e0e0e0" font-family='"DejaVu Sans Condensed","Liberation Sans",sans-serif' textLength="90" lengthAdjust="spacingAndGlyphs">Strike age color codes</text>
<text x="13.3" y="783.5" font-size="10.5" fill="#f0f0f0" font-family='"DejaVu Sans Condensed","Liberation Sans",sans-serif' textLength="27.8" lengthAdjust="spacingAndGlyphs">Recent</text>
<text x="13.3" y="796.5" font-size="10.5" fill="#f0f0f0" font-family='"DejaVu Sans Condensed","Liberation Sans",sans-serif' textLength="15" lengthAdjust="spacingAndGlyphs">Old</text>
<circle cx="60.5" cy="780.5" r="4" fill="none" stroke="#00e0e8" stroke-width="1.2"/><path d="M58.0 780.5H63.0" stroke="#00e0e8" stroke-width="1.2" fill="none"/>
<path d="M82.0 780.5H89.0" stroke="#00e0e8" stroke-width="1.2" fill="none"/>
<circle cx="110.5" cy="780.5" r="4" fill="none" stroke="#00e0e8" stroke-width="1.2"/><path d="M108.0 780.5H113.0" stroke="#00e0e8" stroke-width="1.2" fill="none"/><path d="M110.5 778.0V783.0" stroke="#00e0e8" stroke-width="1.2" fill="none"/>
<path d="M132.0 780.5H139.0" stroke="#00e0e8" stroke-width="1.2" fill="none"/><path d="M135.5 777.0V784.0" stroke="#00e0e8" stroke-width="1.2" fill="none"/>
<circle cx="60.5" cy="793.5" r="4" fill="none" stroke="#f0e800" stroke-width="1.2"/><path d="M58.0 793.5H63.0" stroke="#f0e800" stroke-width="1.2" fill="none"/>
<path d="M82.0 793.5H89.0" stroke="#f0e800" stroke-width="1.2" fill="none"/>
<circle cx="110.5" cy="793.5" r="4" fill="none" stroke="#f0e800" stroke-width="1.2"/><path d="M108.0 793.5H113.0" stroke="#f0e800" stroke-width="1.2" fill="none"/><path d="M110.5 791.0V796.0" stroke="#f0e800" stroke-width="1.2" fill="none"/>
<path d="M132.0 793.5H139.0" stroke="#f0e800" stroke-width="1.2" fill="none"/><path d="M135.5 790.0V797.0" stroke="#f0e800" stroke-width="1.2" fill="none"/>
<text x="153.5" y="783.5" font-size="10.5" fill="#f4d800" font-family='"DejaVu Sans Condensed","Liberation Sans",sans-serif' textLength="16.8" lengthAdjust="spacingAndGlyphs">15+</text>
<text x="187.8" y="783.5" font-size="10.5" fill="#e8b000" font-family='"DejaVu Sans Condensed","Liberation Sans",sans-serif' textLength="16.8" lengthAdjust="spacingAndGlyphs">30+</text>
<text x="222.8" y="783.5" font-size="10.5" fill="#e89000" font-family='"DejaVu Sans Condensed","Liberation Sans",sans-serif' textLength="16.8" lengthAdjust="spacingAndGlyphs">45+</text>
<text x="153.5" y="796.5" font-size="10.5" fill="#e87800" font-family='"DejaVu Sans Condensed","Liberation Sans",sans-serif' textLength="16.8" lengthAdjust="spacingAndGlyphs">60+</text>
<text x="187.8" y="796.5" font-size="10.5" fill="#e85c00" font-family='"DejaVu Sans Condensed","Liberation Sans",sans-serif' textLength="16.8" lengthAdjust="spacingAndGlyphs">75+</text>
<text x="222.8" y="796.5" font-size="10.5" fill="#e83800" font-family='"DejaVu Sans Condensed","Liberation Sans",sans-serif' textLength="16.8" lengthAdjust="spacingAndGlyphs">90+</text>
<rect x="685" y="792" width="121" height="14" fill="#000"/>
<text x="689" y="802" font-size="10.5" fill="#f4f4f4" font-family='"DejaVu Sans Condensed","Liberation Sans",sans-serif' textLength="113" lengthAdjust="spacingAndGlyphs">©2005 Astrogenic Systems</text>
<rect x="812.5" y="8.5" width="319" height="319" fill="none" stroke="#c8c8c8" stroke-width="1" rx="6"/>
<rect x="812.5" y="333.5" width="319" height="114" fill="none" stroke="#c8c8c8" stroke-width="1" rx="6"/>
<rect x="812.5" y="453.5" width="319" height="349" fill="none" stroke="#c8c8c8" stroke-width="1" rx="6"/>
<rect x="819.5" y="16.5" width="57" height="17" fill="#5a0000" stroke="#d0d0d0" stroke-width="1"/>
<text x="848" y="30" font-size="12.5" fill="#d8d8d8" font-family='"DejaVu Serif","Liberation Serif",serif' font-weight="bold" text-anchor="middle" textLength="49" lengthAdjust="spacingAndGlyphs">STRIKE</text>
<rect x="883.5" y="16.5" width="57" height="17" fill="#333" stroke="#d0d0d0" stroke-width="1"/>
<text x="912" y="30" font-size="12.5" fill="#c0c0c0" font-family='"DejaVu Serif","Liberation Serif",serif' font-weight="bold" text-anchor="middle" textLength="43" lengthAdjust="spacingAndGlyphs">NOISE</text>
<rect x="994.5" y="16.5" width="127" height="17" fill="#333" stroke="#d0d0d0" stroke-width="1"/>
<text x="998.5" y="30" font-size="13" fill="#fff" font-family='"DejaVu Sans Condensed","Liberation Sans",sans-serif' font-weight="bold" textLength="53" lengthAdjust="spacingAndGlyphs">Bng 93°</text>
<text x="1117.5" y="30" font-size="13" fill="#00f800" font-family='"DejaVu Sans Condensed","Liberation Sans",sans-serif' font-weight="bold" text-anchor="end" textLength="42" lengthAdjust="spacingAndGlyphs">293mi</text>
<rect x="821.5" y="64.5" width="81" height="15" fill="#555" stroke="#c8c8c8" stroke-width="1"/>
<text x="862.0" y="76.5" font-size="12" fill="#fff" font-family='"DejaVu Sans","Liberation Sans",sans-serif' text-anchor="middle" textLength="66" lengthAdjust="spacingAndGlyphs">Strikes/min</text>
<rect x="931.5" y="64.5" width="81" height="15" fill="#555" stroke="#c8c8c8" stroke-width="1"/>
<text x="972.0" y="76.5" font-size="12" fill="#fff" font-family='"DejaVu Sans","Liberation Sans",sans-serif' text-anchor="middle" textLength="57" lengthAdjust="spacingAndGlyphs">Close/min</text>
<rect x="1041.5" y="64.5" width="81" height="15" fill="#555" stroke="#c8c8c8" stroke-width="1"/>
<text x="1082.0" y="76.5" font-size="12" fill="#fff" font-family='"DejaVu Sans","Liberation Sans",sans-serif' text-anchor="middle" textLength="63" lengthAdjust="spacingAndGlyphs">Noises/min</text>
<text x="901.5" y="112" font-size="29" fill="#fff" font-family='"DejaVu Sans","Liberation Sans",sans-serif' font-weight="bold" text-anchor="end">1</text>
<text x="1013" y="112" font-size="29" fill="#fff" font-family='"DejaVu Sans","Liberation Sans",sans-serif' font-weight="bold" text-anchor="end">0</text>
<text x="1123" y="112" font-size="29" fill="#c0c0c0" font-family='"DejaVu Sans","Liberation Sans",sans-serif' font-weight="bold" text-anchor="end">0</text>
<text x="903" y="143" font-size="12" fill="#fff" font-family='"DejaVu Sans","Liberation Sans",sans-serif' text-anchor="end" textLength="76" lengthAdjust="spacingAndGlyphs">Total Strikes</text>
<text x="1012.5" y="143" font-size="12" fill="#fff" font-family='"DejaVu Sans","Liberation Sans",sans-serif' text-anchor="end" textLength="69" lengthAdjust="spacingAndGlyphs">Total Close</text>
<text x="1122.5" y="143" font-size="12" fill="#c0c0c0" font-family='"DejaVu Sans","Liberation Sans",sans-serif' text-anchor="end" textLength="75" lengthAdjust="spacingAndGlyphs">Total Noises</text>
<text x="902.5" y="160.5" font-size="12" fill="#fff" font-family='"DejaVu Sans","Liberation Sans",sans-serif' text-anchor="end">6</text>
<text x="1012.5" y="160.5" font-size="12" fill="#fff" font-family='"DejaVu Sans","Liberation Sans",sans-serif' text-anchor="end">0</text>
<text x="1122.5" y="160.5" font-size="12" fill="#c8c8c8" font-family='"DejaVu Sans","Liberation Sans",sans-serif' text-anchor="end">11</text>
<text x="821" y="215" font-size="12" fill="#c0c0c0" font-family='"DejaVu Sans","Liberation Sans",sans-serif' textLength="165" lengthAdjust="spacingAndGlyphs">Lightning type distribution</text>
<line x1="821" y1="217.5" x2="1124" y2="217.5" stroke="#909090" stroke-width="1"/>
<text x="821" y="236.5" font-size="12" fill="#fff" font-family='"DejaVu Sans Condensed","Liberation Sans",sans-serif' font-weight="bold" textLength="84" lengthAdjust="spacingAndGlyphs">Cloud-ground</text>
<text x="913" y="236.5" font-size="12" fill="#ddd" font-family='"DejaVu Sans","Liberation Sans",sans-serif'>+</text>
<rect x="925.5" y="227.0" width="50" height="11" fill="#000" stroke="#8a8a8a" stroke-width="1" rx="2"/>
<rect x="926" y="227.5" width="41" height="10" fill="#ff0000"/>
<text x="979.5" y="236.5" font-size="12" fill="#fff" font-family='"DejaVu Sans Condensed","Liberation Sans",sans-serif' font-weight="bold" textLength="29" lengthAdjust="spacingAndGlyphs">83%</text>
<text x="1015.5" y="236.5" font-size="12" fill="#ddd" font-family='"DejaVu Sans","Liberation Sans",sans-serif' font-weight="bold" textLength="7.5" lengthAdjust="spacingAndGlyphs">–</text>
<rect x="1028.5" y="227.0" width="50" height="11" fill="#000" stroke="#8a8a8a" stroke-width="1" rx="2"/>
<text x="1082.5" y="236.5" font-size="12" fill="#fff" font-family='"DejaVu Sans Condensed","Liberation Sans",sans-serif' font-weight="bold" textLength="21" lengthAdjust="spacingAndGlyphs">0%</text>
<text x="821" y="260.5" font-size="12" fill="#c8c8c8" font-family='"DejaVu Sans Condensed","Liberation Sans",sans-serif' font-weight="bold" textLength="38" lengthAdjust="spacingAndGlyphs">Count</text>
<text x="925.5" y="260.5" font-size="12" fill="#fff" font-family='"DejaVu Sans Condensed","Liberation Sans",sans-serif' font-weight="bold">5</text>
<text x="1028.5" y="260.5" font-size="12" fill="#fff" font-family='"DejaVu Sans Condensed","Liberation Sans",sans-serif' font-weight="bold">0</text>
<text x="821" y="290.5" font-size="12" fill="#fff" font-family='"DejaVu Sans Condensed","Liberation Sans",sans-serif' font-weight="bold" textLength="64" lengthAdjust="spacingAndGlyphs">Intracloud</text>
<text x="913" y="290.5" font-size="12" fill="#ddd" font-family='"DejaVu Sans","Liberation Sans",sans-serif'>+</text>
<rect x="925.5" y="281.0" width="50" height="11" fill="#000" stroke="#8a8a8a" stroke-width="1" rx="2"/>
<rect x="926" y="281.5" width="8.5" height="10" fill="#e85aa8"/>
<text x="979.5" y="290.5" font-size="12" fill="#fff" font-family='"DejaVu Sans Condensed","Liberation Sans",sans-serif' font-weight="bold" textLength="29" lengthAdjust="spacingAndGlyphs">17%</text>
<text x="1015.5" y="290.5" font-size="12" fill="#ddd" font-family='"DejaVu Sans","Liberation Sans",sans-serif' font-weight="bold" textLength="7.5" lengthAdjust="spacingAndGlyphs">–</text>
<rect x="1028.5" y="281.0" width="50" height="11" fill="#000" stroke="#8a8a8a" stroke-width="1" rx="2"/>
<text x="1082.5" y="290.5" font-size="12" fill="#fff" font-family='"DejaVu Sans Condensed","Liberation Sans",sans-serif' font-weight="bold" textLength="21" lengthAdjust="spacingAndGlyphs">0%</text>
<text x="821" y="314.5" font-size="12" fill="#c8c8c8" font-family='"DejaVu Sans Condensed","Liberation Sans",sans-serif' font-weight="bold" textLength="38" lengthAdjust="spacingAndGlyphs">Count</text>
<text x="925.5" y="314.5" font-size="12" fill="#fff" font-family='"DejaVu Sans Condensed","Liberation Sans",sans-serif' font-weight="bold">1</text>
<text x="1028.5" y="314.5" font-size="12" fill="#fff" font-family='"DejaVu Sans Condensed","Liberation Sans",sans-serif' font-weight="bold">0</text>
<text x="821.5" y="352.5" font-size="16.5" fill="#00f800" font-family='"DejaVu Sans Condensed","Liberation Sans",sans-serif' font-weight="bold" textLength="202" lengthAdjust="spacingAndGlyphs">3/14/2026 2:00:11 AM</text>
<line x1="821" y1="358.5" x2="1123" y2="358.5" stroke="#909090" stroke-width="1"/>
<text x="821" y="388" font-size="12" fill="#fff" font-family='"DejaVu Sans","Liberation Sans",sans-serif'>Squelch</text>
<text x="910" y="388" font-size="12" fill="#fff" font-family='"DejaVu Sans","Liberation Sans",sans-serif'>0</text>
<text x="981" y="388" font-size="12" fill="#fff" font-family='"DejaVu Sans","Liberation Sans",sans-serif'>Upload</text>
<text x="1061" y="388" font-size="12" fill="#c0c0c0" font-family='"DejaVu Sans","Liberation Sans",sans-serif' textLength="54" lengthAdjust="spacingAndGlyphs">Disabled</text>
<text x="821" y="408" font-size="12" fill="#fff" font-family='"DejaVu Sans","Liberation Sans",sans-serif' textLength="72.5" lengthAdjust="spacingAndGlyphs">Persistence</text>
<text x="910" y="408" font-size="12" fill="#fff" font-family='"DejaVu Sans","Liberation Sans",sans-serif' textLength="41" lengthAdjust="spacingAndGlyphs">90 min</text>
<text x="981" y="408" font-size="12" fill="#fff" font-family='"DejaVu Sans","Liberation Sans",sans-serif' textLength="50.5" lengthAdjust="spacingAndGlyphs">Capture</text>
<text x="1061" y="408" font-size="12" fill="#00f800" font-family='"DejaVu Sans","Liberation Sans",sans-serif' textLength="36.5" lengthAdjust="spacingAndGlyphs">Active</text>
<text x="821" y="428" font-size="12" fill="#fff" font-family='"DejaVu Sans","Liberation Sans",sans-serif' textLength="40" lengthAdjust="spacingAndGlyphs">Range</text>
<text x="910" y="428" font-size="12" fill="#fff" font-family='"DejaVu Sans","Liberation Sans",sans-serif' textLength="41" lengthAdjust="spacingAndGlyphs">313 mi</text>
<text x="981" y="428" font-size="12" fill="#fff" font-family='"DejaVu Sans","Liberation Sans",sans-serif' textLength="52.5" lengthAdjust="spacingAndGlyphs">Receiver</text>
<text x="1061" y="428" font-size="12" fill="#00f800" font-family='"DejaVu Sans","Liberation Sans",sans-serif' textLength="51" lengthAdjust="spacingAndGlyphs">Enabled</text>
<text x="821" y="475" font-size="12" fill="#c0c0c0" font-family='"DejaVu Sans","Liberation Sans",sans-serif' textLength="43.5" lengthAdjust="spacingAndGlyphs">Uptime</text>
<text x="910" y="475" font-size="12" fill="#fff" font-family='"DejaVu Sans","Liberation Sans",sans-serif' textLength="52" lengthAdjust="spacingAndGlyphs">1453:45</text>
<text x="981" y="475" font-size="12" fill="#c0c0c0" font-family='"DejaVu Sans","Liberation Sans",sans-serif' textLength="62" lengthAdjust="spacingAndGlyphs">Peak time</text>
<text x="1061" y="475" font-size="12" fill="#c0c0c0" font-family='"DejaVu Sans","Liberation Sans",sans-serif' textLength="24" lengthAdjust="spacingAndGlyphs">Plot</text>
<text x="821" y="498" font-size="12" fill="#c0c0c0" font-family='"DejaVu Sans","Liberation Sans",sans-serif' textLength="60.5" lengthAdjust="spacingAndGlyphs">Peak rate</text>
<text x="910" y="498" font-size="12" fill="#fff" font-family='"DejaVu Sans","Liberation Sans",sans-serif' textLength="34" lengthAdjust="spacingAndGlyphs">1/min</text>
<text x="981" y="498" font-size="12" fill="#fff" font-family='"DejaVu Sans","Liberation Sans",sans-serif' textLength="50.5" lengthAdjust="spacingAndGlyphs">2:00 AM</text>
<text x="1061" y="498" font-size="12" fill="#fff" font-family='"DejaVu Sans","Liberation Sans",sans-serif' textLength="36" lengthAdjust="spacingAndGlyphs">Strike</text>
<text x="822" y="528" font-size="12" fill="#c0c0c0" font-family='"DejaVu Sans","Liberation Sans",sans-serif' textLength="76" lengthAdjust="spacingAndGlyphs">Trend graph</text>
<text x="908.5" y="528" font-size="12" fill="#fff" font-family='"DejaVu Sans","Liberation Sans",sans-serif' textLength="41" lengthAdjust="spacingAndGlyphs">60 min</text>
<line x1="1088.5" y1="542" x2="1088.5" y2="778" stroke="#d0d0d0" stroke-width="1"/>
<line x1="822" y1="777.5" x2="1089" y2="777.5" stroke="#d0d0d0" stroke-width="1"/>
<line x1="1085" y1="542.5" x2="1089" y2="542.5" stroke="#d0d0d0" stroke-width="1"/>
<line x1="822.5" y1="774" x2="822.5" y2="778" stroke="#d0d0d0" stroke-width="1"/>
<line x1="1085" y1="582.5" x2="1089" y2="582.5" stroke="#d0d0d0" stroke-width="1"/>
<line x1="867.5" y1="774" x2="867.5" y2="778" stroke="#d0d0d0" stroke-width="1"/>
<line x1="1085" y1="621.5" x2="1089" y2="621.5" stroke="#d0d0d0" stroke-width="1"/>
<line x1="911.5" y1="774" x2="911.5" y2="778" stroke="#d0d0d0" stroke-width="1"/>
<line x1="1085" y1="660.5" x2="1089" y2="660.5" stroke="#d0d0d0" stroke-width="1"/>
<line x1="956.5" y1="774" x2="956.5" y2="778" stroke="#d0d0d0" stroke-width="1"/>
<line x1="1085" y1="699.5" x2="1089" y2="699.5" stroke="#d0d0d0" stroke-width="1"/>
<line x1="1000.5" y1="774" x2="1000.5" y2="778" stroke="#d0d0d0" stroke-width="1"/>
<line x1="1085" y1="738.5" x2="1089" y2="738.5" stroke="#d0d0d0" stroke-width="1"/>
<line x1="1044.5" y1="774" x2="1044.5" y2="778" stroke="#d0d0d0" stroke-width="1"/>
<line x1="1085" y1="778.5" x2="1089" y2="778.5" stroke="#d0d0d0" stroke-width="1"/>
<line x1="1089.5" y1="774" x2="1089.5" y2="778" stroke="#d0d0d0" stroke-width="1"/>
<text x="1092" y="547" font-size="12" fill="#d0d0d0" font-family='"DejaVu Sans","Liberation Sans",sans-serif' textLength="14" lengthAdjust="spacingAndGlyphs">30</text>
<text x="1092" y="625" font-size="12" fill="#d0d0d0" font-family='"DejaVu Sans","Liberation Sans",sans-serif' textLength="14" lengthAdjust="spacingAndGlyphs">20</text>
<text x="1092" y="703.5" font-size="12" fill="#d0d0d0" font-family='"DejaVu Sans","Liberation Sans",sans-serif' textLength="14" lengthAdjust="spacingAndGlyphs">10</text>
<text x="820.5" y="793" font-size="12" fill="#d0d0d0" font-family='"DejaVu Sans","Liberation Sans",sans-serif' textLength="14" lengthAdjust="spacingAndGlyphs">60</text>
<text x="864.7" y="793" font-size="12" fill="#d0d0d0" font-family='"DejaVu Sans","Liberation Sans",sans-serif' textLength="14" lengthAdjust="spacingAndGlyphs">50</text>
<text x="909" y="793" font-size="12" fill="#d0d0d0" font-family='"DejaVu Sans","Liberation Sans",sans-serif' textLength="14" lengthAdjust="spacingAndGlyphs">40</text>
<text x="953.5" y="793" font-size="12" fill="#d0d0d0" font-family='"DejaVu Sans","Liberation Sans",sans-serif' textLength="14" lengthAdjust="spacingAndGlyphs">30</text>
<text x="997" y="793" font-size="12" fill="#d0d0d0" font-family='"DejaVu Sans","Liberation Sans",sans-serif' textLength="14" lengthAdjust="spacingAndGlyphs">20</text>
<text x="1041.6" y="793" font-size="12" fill="#d0d0d0" font-family='"DejaVu Sans","Liberation Sans",sans-serif' textLength="14" lengthAdjust="spacingAndGlyphs">10</text>
<text x="1087.5" y="793" font-size="12" fill="#d0d0d0" font-family='"DejaVu Sans","Liberation Sans",sans-serif'>0</text>
<text x="1100.5" y="793" font-size="12" fill="#d0d0d0" font-family='"DejaVu Sans","Liberation Sans",sans-serif' textLength="18" lengthAdjust="spacingAndGlyphs">min</text>
<path d="M888 777.5 L889.5 769.5 L893.0 769.5 L894.5 777.5" fill="none" stroke="#fff" stroke-width="1"/>
<path d="M978.5 777.5 L980.0 769.5 L985.0 769.5 L986.5 777.5" fill="none" stroke="#fff" stroke-width="1"/>
<path d="M1039 777.5 L1040.5 769.5 L1043.5 769.5 L1045 777.5" fill="none" stroke="#fff" stroke-width="1"/>
<path d="M1072 777.5 L1073.5 769.5 L1078.5 769.5 L1080 777.5" fill="none" stroke="#fff" stroke-width="1"/>
</svg>
</body></html>
